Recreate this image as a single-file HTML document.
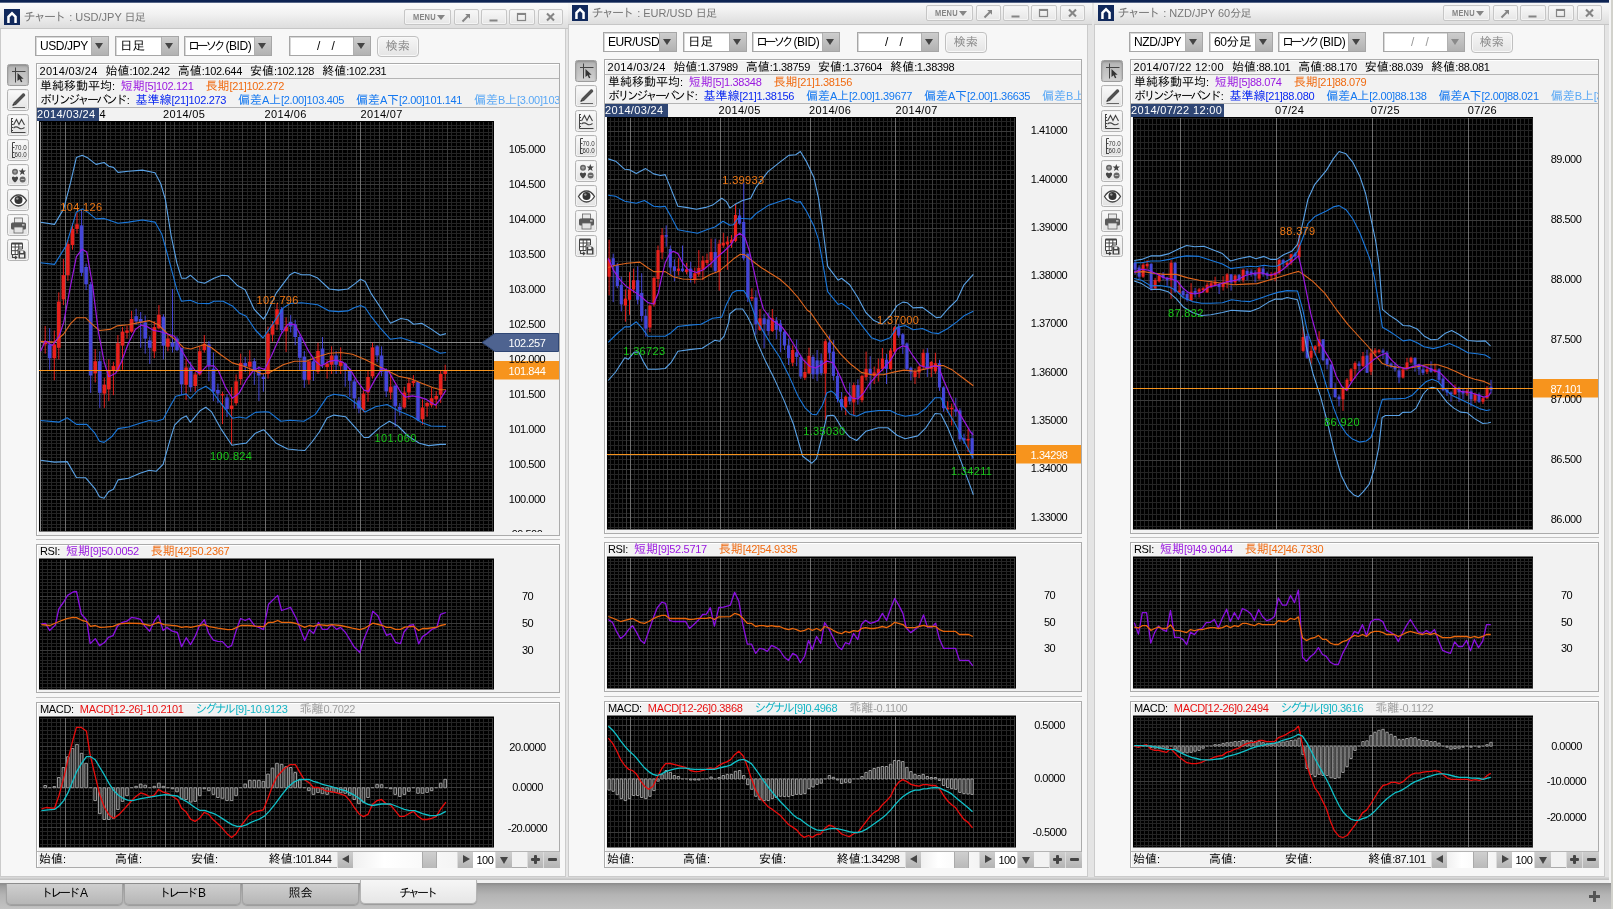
<!DOCTYPE html><html lang="ja"><head><meta charset="utf-8"><title>チャート</title><style>
*{box-sizing:border-box}
html,body{margin:0;padding:0}
body{width:1613px;height:909px;overflow:hidden;position:relative;background:#e4e4e4;font-family:"Liberation Sans","IPAGothic",sans-serif;font-size:11px;color:#000}
div,svg.a,i,b{position:absolute}
span{position:static}
.t{white-space:nowrap}
.n{font-size:11px;letter-spacing:-.5px}
.r{letter-spacing:-.33px}
.d{font-size:11px;letter-spacing:.35px}
.ttl{color:#777;font-size:11px;line-height:16px}
.ttl .j{font-size:11px;letter-spacing:-.8px}
.g{display:inline-block;position:static;width:12px}
.ax{left:0;width:64px;text-align:center;line-height:14px}
.j{font-family:"Liberation Sans","IPAGothic",sans-serif;font-size:12px;letter-spacing:0}
.h{font-family:"Liberation Sans","IPAGothic",sans-serif;font-size:14px;letter-spacing:-.8px}
.dd{letter-spacing:.3px}
.k{font-family:"Liberation Sans","IPAGothic",sans-serif;font-size:12px;letter-spacing:-2.6px;margin-right:2.2px}
.st .k{letter-spacing:-3.4px;margin-right:3px}
.ttl .k{font-size:12px;letter-spacing:-1.8px;margin-right:1.8px}
.tab .k{letter-spacing:-3px;margin-right:3px}
.win{overflow:hidden;will-change:transform}
.tb{background:linear-gradient(#fbfbfb,#f1f1f1 45%,#dddddd);border-bottom:1px solid #c6c6c6}
.body{background:#f7f7f7;border:1px solid #cbcbcb;border-top:0}
.wb{border:1px solid #c6c6c6;border-radius:2px;background:linear-gradient(#f8f8f8,#e6e6e6);box-shadow:inset 0 0 0 1px #f4f4f4}
.wb svg{position:absolute;left:-1px;top:0}
.mn{position:absolute;left:8px;top:1px;font-size:8.5px;font-weight:bold;color:#858585;line-height:12px;letter-spacing:.2px;transform:scaleX(.88);transform-origin:0 0}
.dn{left:32px;top:5px;border:4px solid transparent;border-top:5px solid #858585;border-bottom:0}
.st{font-size:12px;letter-spacing:-.4px}
.st .j{font-size:12.5px}
.st .h{font-size:16px;letter-spacing:-1px}
.sel{background:#fff;border:1px solid #a6a6a6;box-shadow:inset 1px 1px 0 #d8d8d8}
.dis .st{color:#999}
.dis .arr i{border-top-color:#8a8a8a}
.arr{right:0;top:0;bottom:0;background:linear-gradient(#cdcdcd,#b2b2b2);border-left:1px solid #b0b0b0}
.arr i{left:50%;top:50%;margin:-3px 0 0 -4.5px;border:4.5px solid transparent;border-top:6px solid #444;border-bottom:0}
.btn{border:1px solid #c0c0c0;border-radius:4px;background:linear-gradient(#f6f6f6,#e4e4e4);box-shadow:inset 0 0 0 1px #f8f8f8}
.tool{border:1px solid #b4b4b4;border-radius:2.5px;background:linear-gradient(#fafafa,#e2e2e2);box-shadow:inset 0 0 0 1px #f2f2f2}
.tool.on{background:linear-gradient(#b4b4b4,#d0d0d0);box-shadow:inset 0 1px 2px #8c8c8c;border-color:#9c9c9c}
.pan{background:#f2f2f2;border:1px solid #ababab;box-shadow:inset 1px 1px 0 #fff}
.sb{background:linear-gradient(#cecece,#b4b4b4);border-left:1px solid #dcdcdc}
.lf{left:4px;top:3.5px;border:4.5px solid transparent;border-right:7px solid #444;border-left:0}
.rt{left:5px;top:3.5px;border:4.5px solid transparent;border-left:7px solid #444;border-right:0}
.dn2{left:3.5px;top:5px;border:4.5px solid transparent;border-top:7px solid #444;border-bottom:0}
.pm{left:0;width:100%;text-align:center;top:-2.5px;font-size:17px;line-height:18px;font-weight:bold;color:#333;font-family:"Liberation Sans",sans-serif}
.ph{left:3.5px;top:6.5px;width:9px;height:3px;background:#444;border-radius:1px}
.pv{left:6.5px;top:3.5px;width:3px;height:9px;background:#444;border-radius:1px}
.trk{background:linear-gradient(90deg,#f0f0f0,#fff 30%,#f4f4f4)}
.thumb{background:linear-gradient(#cfcfcf,#b9b9b9);border-left:1px solid #aaa;border-right:1px solid #aaa}
.tab{will-change:transform;top:883.5px;height:20.5px;border:1px solid #a2a2a2;border-top:0;border-radius:0 0 5px 5px;background:linear-gradient(#cfcfcf,#b6b6b6);text-align:center;line-height:19px;font-size:12px;box-shadow:0 1px 1px #9a9a9a}
.tab.on{background:linear-gradient(#f6f6f6,#e6e6e6);top:880px;height:24px;line-height:26px;border-color:#b4b4b4}
</style></head><body><div style="left:0px;top:876.5px;width:1613px;height:4px;background:linear-gradient(#dcdcdc,#b6b6b6)"></div><div style="left:0px;top:880px;width:1613px;height:3.5px;background:#f0f0f0"></div><div style="left:0px;top:883px;width:1613px;height:26px;background:linear-gradient(#8a8a8a,#9e9e9e 12%,#b4b4b4 45%,#c3c3c3)"></div><div style="left:1609px;top:0px;width:2px;height:883px;background:#f4f4f4"></div><div style="left:1611px;top:0px;width:2px;height:909px;background:#d2d2cc"></div><div class="win" style="left:0px;top:0px;width:569.5px;height:880px"><div class="tb" style="left:0px;top:3px;width:569.5px;height:26px;"></div><div class="body" style="left:0px;top:29px;width:566px;height:848px;"></div><svg class="a" style="left:4px;top:9px" width="16" height="16" viewBox="0 0 16 16"><rect width="16" height="16" fill="#11295c"/><path d="M3.2 14V7.2L8 2.6L12.8 7.2V14H10.3V8.3L8 6.1L5.7 8.3V14Z" fill="#fff"/></svg><div class="t ttl" style="left:23.5px;top:9px;"><span class="k">チャート</span> : USD/JPY <span class="j">日足</span></div><div class="wb" style="left:404px;top:9px;width:47px;height:15.5px;"><span class="mn">MENU</span><i class="dn"></i></div><div class="wb" style="left:453.5px;top:9px;width:25px;height:15.5px;"><svg width="25" height="15" viewBox="0 0 25 15"><path d="M8.5 11.5L14.5 5.5" stroke="#858585" stroke-width="2"/><path d="M11.2 4H16V8.8Z" fill="#858585"/></svg></div><div class="wb" style="left:481px;top:9px;width:25.5px;height:15.5px;"><svg width="25" height="15" viewBox="0 0 25 15"><rect x="8.5" y="9.5" width="8" height="2" fill="#858585"/></svg></div><div class="wb" style="left:509px;top:9px;width:25.5px;height:15.5px;"><svg width="25" height="15" viewBox="0 0 25 15"><rect x="8.5" y="3.5" width="8" height="7" fill="none" stroke="#858585" stroke-width="1.2"/><rect x="8" y="3" width="9" height="2" fill="#858585"/></svg></div><div class="wb" style="left:537.5px;top:9px;width:25px;height:15.5px;"><svg width="25" height="15" viewBox="0 0 25 15"><path d="M9 3.5L16 10.5M16 3.5L9 10.5" stroke="#858585" stroke-width="2.1"/></svg></div><div class="sel" style="left:35px;top:36px;width:73.5px;height:20px;"><div class="t st" style="left:4px;top:0;line-height:18px">USD/JPY</div><div class="arr" style="width:16.5px"><i></i></div></div><div class="sel" style="left:115px;top:36px;width:63.5px;height:20px;"><div class="t st" style="left:4px;top:0;line-height:18px"><span class="j">日足</span></div><div class="arr" style="width:16.5px"><i></i></div></div><div class="sel" style="left:184px;top:36px;width:87.5px;height:20px;"><div class="t st" style="left:3px;top:0;line-height:18px"><span class="k">ローソク</span>(BID)</div><div class="arr" style="width:16.5px"><i></i></div></div><div class="sel" style="left:289px;top:36px;width:81.5px;height:20px;"><div class="t st" style="left:27px;top:0;line-height:18px">/ /</div><div class="arr" style="width:16.5px"><i></i></div></div><div class="btn" style="left:377px;top:36px;width:41.5px;height:20.5px;"><div class="t" style="left:0;width:100%;text-align:center;top:0;line-height:18px;color:#8a8a8a;font-size:12px"><span class="j">検索</span></div></div><div class="tool on" style="left:7px;top:64px;width:21.5px;height:21.5px;"><svg width="21" height="21" viewBox="0 0 21 21" style="position:absolute;left:-.5px;top:-.5px"><path d="M4 6.5H17.5M7.5 2.5V17.5" stroke="#444" stroke-width="1" fill="none"/><path d="M9.5 8V16L11.6 14.2L13 17.3L14.3 16.7L13 13.7H15.6Z" fill="#333"/></svg></div><div class="tool" style="left:7px;top:89px;width:21.5px;height:21.5px;"><svg width="21" height="21" viewBox="0 0 21 21" style="position:absolute;left:-.5px;top:-.5px"><path d="M4.6 15.4L5.6 12.6L14.6 3.6C15.1 3.1 15.8 3.1 16.3 3.6L16.9 4.2C17.4 4.7 17.4 5.4 16.9 5.9L7.9 14.9Z" fill="#505050"/><path d="M4.3 15.8L6.4 15.2L5 13.8Z" fill="#222"/><path d="M4.5 17.5H17" stroke="#666" stroke-width="1"/></svg></div><div class="tool" style="left:7px;top:114px;width:21.5px;height:21.5px;"><svg width="21" height="21" viewBox="0 0 21 21" style="position:absolute;left:-.5px;top:-.5px"><path d="M3.5 3V17.5H17.5" stroke="#444" fill="none"/><path d="M3 3.5H5M3 6.5H5M3 9.5H5M3 12.5H5M3 15.5H5" stroke="#444"/><path d="M5.5 10L8.5 4.5L11 9.5L13.5 4.5L16.5 10" stroke="#444" fill="none" stroke-width="1.1"/><path d="M5.5 13C7.5 11 9 11.5 11 13S14.5 14 16.5 12.5" stroke="#444" fill="none" stroke-width="1.1"/></svg></div><div class="tool" style="left:7px;top:139px;width:21.5px;height:21.5px;"><svg width="21" height="21" viewBox="0 0 21 21" style="position:absolute;left:-.5px;top:-.5px"><path d="M4.5 2.5V18M4.5 2.5H7M4.5 7.5H6.5M4.5 12.5H6.5M4.5 17.5H7" stroke="#444" fill="none"/><text x="6.6" y="10" font-size="7" font-family="Liberation Sans,sans-serif" fill="#333" textLength="12" lengthAdjust="spacingAndGlyphs">70.0</text><text x="6.6" y="17" font-size="7" font-family="Liberation Sans,sans-serif" fill="#333" textLength="12" lengthAdjust="spacingAndGlyphs">60.0</text></svg></div><div class="tool" style="left:7px;top:164px;width:21.5px;height:21.5px;"><svg width="21" height="21" viewBox="0 0 21 21" style="position:absolute;left:-.5px;top:-.5px"><circle cx="7" cy="6.8" r="3" fill="#666"/><path d="M5.3 6.8H8.7M7 5.1V8.5" stroke="#bbb" stroke-width=".8"/><path d="M14.3 3L15.3 5.6H18L15.8 7.3L16.6 10L14.3 8.4L12 10L12.8 7.3L10.6 5.6H13.3Z" fill="#444"/><path d="M7 17.5C3 14.5 3.5 11.5 5.3 11.5C6.3 11.5 7 12.4 7 12.4S7.7 11.5 8.7 11.5C10.5 11.5 11 14.5 7 17.5Z" fill="#444"/><circle cx="14.6" cy="14.5" r="3" fill="#666"/><path d="M12.9 14.5H16.3" stroke="#bbb" stroke-width=".9"/></svg></div><div class="tool" style="left:7px;top:189px;width:21.5px;height:21.5px;"><svg width="21" height="21" viewBox="0 0 21 21" style="position:absolute;left:-.5px;top:-.5px"><path d="M2.5 10.5C5 6.2 8 5 10.5 5S16 6.2 18.5 10.5C16 14.8 13 16 10.5 16S5 14.8 2.5 10.5Z" fill="#fff" stroke="#444" stroke-width="1.3"/><circle cx="10.5" cy="10" r="4" fill="#333"/><circle cx="9.3" cy="8.6" r="1.2" fill="#999"/></svg></div><div class="tool" style="left:7px;top:214px;width:21.5px;height:21.5px;"><svg width="21" height="21" viewBox="0 0 21 21" style="position:absolute;left:-.5px;top:-.5px"><rect x="6.5" y="3" width="8" height="5" fill="#e8e8e8" stroke="#666" stroke-width=".8"/><rect x="3" y="7.5" width="15" height="7" rx="1.5" fill="#5a5a5a"/><rect x="6" y="12" width="9" height="6" fill="#e4e4e4" stroke="#666" stroke-width=".8"/><rect x="14" y="9.3" width="2.5" height="1.2" fill="#ddd"/></svg></div><div class="tool" style="left:7px;top:239px;width:21.5px;height:21.5px;"><svg width="21" height="21" viewBox="0 0 21 21" style="position:absolute;left:-.5px;top:-.5px"><path d="M3.5 3.5H14.5V9H10V14.5H3.5Z" fill="#fff" stroke="#444"/><path d="M3.5 7H14.5M3.5 10.7H10M7.2 3.5V14.5M10.8 3.5V9" stroke="#444" fill="none"/><path d="M3.5 3.5H14.5" stroke="#444" stroke-width="2"/><path d="M10.5 10.5H16L17.5 12V18.5H10.5Z" fill="#444"/><rect x="12" y="14.5" width="4" height="3" fill="#eee"/><rect x="12.3" y="10.8" width="3" height="2.2" fill="#eee"/><path d="M4.5 15V17.5H8.5M7 16L8.8 17.5L7 19" stroke="#444" fill="none" stroke-width="1.1"/></svg></div><div class="pan" style="left:35.5px;top:63px;width:524px;height:472.5px;"></div><div style="left:35.5px;top:539px;width:524px;height:1px;background:#c2c2c2"></div><div class="pan" style="left:35.5px;top:544px;width:524px;height:149px;"></div><div style="left:35.5px;top:697px;width:524px;height:1px;background:#c2c2c2"></div><div class="pan" style="left:35.5px;top:701.5px;width:524px;height:166.5px;"></div><div style="left:36.5px;top:78px;width:522px;height:1px;background:#b4b4b4"></div><div style="left:36.5px;top:107px;width:522px;height:1px;background:#b4b4b4"></div><div class="t n r" style="left:39.5px;top:63.5px;line-height:14px"><span class="dd">2014/03/24</span><span class="g" style="width:8px"></span><span class="j">始値</span>:102.242<span class="g" style="width:8px"></span><span class="j">高値</span>:102.644<span class="g" style="width:8px"></span><span class="j">安値</span>:102.128<span class="g" style="width:8px"></span><span class="j">終値</span>:102.231</div><div style="left:37px;top:79px;width:521.5px;height:28px;overflow:hidden"><div class="t n r" style="left:3px;top:0px;line-height:14px"><span class="j">単純移動平均</span>:<span class="g" style="width:6px"></span><span style="color:#9a18e0"><span class="j">短期</span>[5]102.121</span><span class="g"></span><span style="color:#f06a10"><span class="j">長期</span>[21]102.272</span></div><div class="t n r" style="left:3px;top:13.5px;line-height:14px"><span class="k">ボリンジャーバンド</span>:<span class="g" style="width:6px"></span><span style="color:#0a28f0"><span class="j">基準線</span>[21]102.273</span><span class="g"></span><span style="color:#1478f0"><span class="j">偏差</span>A<span class="j">上</span>[2.00]103.405</span><span class="g"></span><span style="color:#1478f0"><span class="j">偏差</span>A<span class="j">下</span>[2.00]101.141</span><span class="g"></span><span style="color:#5aa8f5"><span class="j">偏差</span>B<span class="j">上</span>[3.00]103.971</span></div></div><div class="t d" style="left:163px;top:108px;line-height:13px">2014/05</div><div class="t d" style="left:264.5px;top:108px;line-height:13px">2014/06</div><div class="t d" style="left:360.5px;top:108px;line-height:13px">2014/07</div><div class="t d" style="left:99.5px;top:108px;line-height:13px">4</div><div style="left:36.5px;top:107.5px;width:62.5px;height:13.5px;background:#2f4674;overflow:hidden"><div class="t d" style="left:0.5px;top:0.5px;line-height:13px;color:#fff">2014/03/24</div></div><svg class="a" style="left:0;top:0" width="566" height="880" viewBox="0 0 566 880" font-family='Liberation Sans,IPAGothic,sans-serif'><rect x="39" y="121" width="455" height="410.5" fill="#000"/><path d="M42.5 122V530.5M47.5 122V530.5M51.5 122V530.5M56.5 122V530.5M70.5 122V530.5M74.5 122V530.5M79.5 122V530.5M88.5 122V530.5M92.5 122V530.5M97.5 122V530.5M101.5 122V530.5M110.5 122V530.5M115.5 122V530.5M120.5 122V530.5M124.5 122V530.5M133.5 122V530.5M138.5 122V530.5M142.5 122V530.5M147.5 122V530.5M156.5 122V530.5M160.5 122V530.5M170.5 122V530.5M179.5 122V530.5M183.5 122V530.5M188.5 122V530.5M192.5 122V530.5M201.5 122V530.5M206.5 122V530.5M210.5 122V530.5M215.5 122V530.5M224.5 122V530.5M229.5 122V530.5M233.5 122V530.5M238.5 122V530.5M247.5 122V530.5M251.5 122V530.5M256.5 122V530.5M260.5 122V530.5M270.5 122V530.5M274.5 122V530.5M279.5 122V530.5M283.5 122V530.5M292.5 122V530.5M297.5 122V530.5M301.5 122V530.5M306.5 122V530.5M315.5 122V530.5M320.5 122V530.5M324.5 122V530.5M329.5 122V530.5M338.5 122V530.5M342.5 122V530.5M347.5 122V530.5M351.5 122V530.5M365.5 122V530.5M370.5 122V530.5M374.5 122V530.5M383.5 122V530.5M388.5 122V530.5M392.5 122V530.5M397.5 122V530.5M406.5 122V530.5M410.5 122V530.5M415.5 122V530.5M420.5 122V530.5M429.5 122V530.5M433.5 122V530.5M438.5 122V530.5M442.5 122V530.5M451.5 122V530.5M456.5 122V530.5M460.5 122V530.5M465.5 122V530.5M474.5 122V530.5M479.5 122V530.5M483.5 122V530.5M488.5 122V530.5M40 125.5H493M40 128.5H493M40 132.5H493M40 135.5H493M40 139.5H493M40 142.5H493M40 146.5H493M40 153.5H493M40 156.5H493M40 160.5H493M40 163.5H493M40 167.5H493M40 170.5H493M40 174.5H493M40 177.5H493M40 181.5H493M40 188.5H493M40 191.5H493M40 195.5H493M40 198.5H493M40 202.5H493M40 205.5H493M40 209.5H493M40 212.5H493M40 216.5H493M40 223.5H493M40 226.5H493M40 230.5H493M40 233.5H493M40 237.5H493M40 240.5H493M40 244.5H493M40 247.5H493M40 251.5H493M40 258.5H493M40 261.5H493M40 265.5H493M40 268.5H493M40 272.5H493M40 275.5H493M40 279.5H493M40 282.5H493M40 286.5H493M40 293.5H493M40 296.5H493M40 300.5H493M40 303.5H493M40 307.5H493M40 310.5H493M40 314.5H493M40 317.5H493M40 321.5H493M40 328.5H493M40 331.5H493M40 335.5H493M40 338.5H493M40 342.5H493M40 345.5H493M40 349.5H493M40 352.5H493M40 356.5H493M40 363.5H493M40 366.5H493M40 370.5H493M40 373.5H493M40 377.5H493M40 380.5H493M40 384.5H493M40 387.5H493M40 391.5H493M40 398.5H493M40 401.5H493M40 405.5H493M40 408.5H493M40 412.5H493M40 415.5H493M40 419.5H493M40 422.5H493M40 426.5H493M40 433.5H493M40 436.5H493M40 440.5H493M40 443.5H493M40 447.5H493M40 450.5H493M40 454.5H493M40 457.5H493M40 461.5H493M40 468.5H493M40 471.5H493M40 475.5H493M40 478.5H493M40 482.5H493M40 485.5H493M40 489.5H493M40 492.5H493M40 496.5H493M40 503.5H493M40 506.5H493M40 510.5H493M40 513.5H493M40 517.5H493M40 520.5H493M40 524.5H493M40 527.5H493" stroke="#242424" stroke-width="1" fill="none" shape-rendering="crispEdges"/><path d="M40 149.5H493M40 184.5H493M40 219.5H493M40 254.5H493M40 289.5H493M40 324.5H493M40 359.5H493M40 394.5H493M40 429.5H493M40 464.5H493M40 499.5H493M60.5 122V530.5M83.5 122V530.5M106.5 122V530.5M129.5 122V530.5M151.5 122V530.5M174.5 122V530.5M197.5 122V530.5M220.5 122V530.5M242.5 122V530.5M288.5 122V530.5M310.5 122V530.5M333.5 122V530.5M356.5 122V530.5M379.5 122V530.5M401.5 122V530.5M424.5 122V530.5M447.5 122V530.5M470.5 122V530.5M492.5 122V530.5" stroke="#3a3a3a" stroke-width="1" fill="none" shape-rendering="crispEdges"/><path d="M65.5 122V530.5M165.5 122V530.5M265.5 122V530.5M360.5 122V530.5" stroke="#6e6e6e" stroke-width="1" fill="none" shape-rendering="crispEdges"/><clipPath id="c1"><rect x="39" y="121" width="455" height="410.5"/></clipPath><g clip-path="url(#c1)"><path d="M40 342.5H494M40.5 122V530.5" stroke="#8a8a8a" stroke-width="1" shape-rendering="crispEdges"/><path d="M45.2 325.9V353.6" stroke="#e8201c" stroke-width="1"/><rect x="43.4" y="342.1" width="3.6" height="2.3" fill="#e8201c"/><path d="M49.7 328.2V369.8" stroke="#4446d8" stroke-width="1"/><rect x="47.9" y="344.4" width="3.6" height="13.9" fill="#4446d8"/><path d="M54.3 330.5V380.2" stroke="#e8201c" stroke-width="1"/><rect x="52.5" y="344.4" width="3.6" height="13.9" fill="#e8201c"/><path d="M58.8 292.4V359.4" stroke="#e8201c" stroke-width="1"/><rect x="57" y="301.6" width="3.6" height="46.2" fill="#e8201c"/><path d="M63.4 258.9V305.1" stroke="#e8201c" stroke-width="1"/><rect x="61.6" y="275.1" width="3.6" height="24.3" fill="#e8201c"/><path d="M67.9 240.4V280.9" stroke="#e8201c" stroke-width="1"/><rect x="66.1" y="243.9" width="3.6" height="31.2" fill="#e8201c"/><path d="M72.5 223.1V249.7" stroke="#e8201c" stroke-width="1"/><rect x="70.7" y="228.9" width="3.6" height="16.2" fill="#e8201c"/><path d="M77 212.7V233.5" stroke="#e8201c" stroke-width="1"/><rect x="75.2" y="224.3" width="3.6" height="4.6" fill="#e8201c"/><path d="M81.6 210.4V276.2" stroke="#4446d8" stroke-width="1"/><rect x="79.8" y="225.4" width="3.6" height="47.4" fill="#4446d8"/><path d="M86.1 263.5V290.1" stroke="#4446d8" stroke-width="1"/><rect x="84.3" y="267" width="3.6" height="17.3" fill="#4446d8"/><path d="M90.7 282V392.9" stroke="#4446d8" stroke-width="1"/><rect x="88.9" y="284.3" width="3.6" height="91.2" fill="#4446d8"/><path d="M95.2 349V382.5" stroke="#e8201c" stroke-width="1"/><rect x="93.4" y="361.2" width="3.6" height="12" fill="#e8201c"/><path d="M99.8 351.3V407.9" stroke="#4446d8" stroke-width="1"/><rect x="98" y="361.2" width="3.6" height="31.6" fill="#4446d8"/><path d="M104.3 377.9V407.9" stroke="#e8201c" stroke-width="1"/><rect x="102.5" y="384.8" width="3.6" height="8.8" fill="#e8201c"/><path d="M108.8 359.4V401" stroke="#e8201c" stroke-width="1"/><rect x="107" y="370.9" width="3.6" height="18.5" fill="#e8201c"/><path d="M113.4 361.7V395.2" stroke="#e8201c" stroke-width="1"/><rect x="111.6" y="365.9" width="3.6" height="4.6" fill="#e8201c"/><path d="M117.9 335.1V372.1" stroke="#e8201c" stroke-width="1"/><rect x="116.1" y="343.2" width="3.6" height="27.7" fill="#e8201c"/><path d="M122.5 327.1V369.8" stroke="#e8201c" stroke-width="1"/><rect x="120.7" y="331.7" width="3.6" height="13.9" fill="#e8201c"/><path d="M127 325.9V338.6" stroke="#e8201c" stroke-width="1"/><rect x="125.2" y="330.5" width="3.6" height="2.3" fill="#e8201c"/><path d="M131.6 310.9V332.8" stroke="#e8201c" stroke-width="1"/><rect x="129.8" y="319" width="3.6" height="12.7" fill="#e8201c"/><path d="M136.1 308.6V324.7" stroke="#4446d8" stroke-width="1"/><rect x="134.3" y="316.2" width="3.6" height="5.1" fill="#4446d8"/><path d="M140.7 312V347.8" stroke="#4446d8" stroke-width="1"/><rect x="138.9" y="319" width="3.6" height="3.5" fill="#4446d8"/><path d="M145.2 315.5V353.6" stroke="#4446d8" stroke-width="1"/><rect x="143.4" y="322.4" width="3.6" height="16.2" fill="#4446d8"/><path d="M149.8 336.3V364" stroke="#4446d8" stroke-width="1"/><rect x="148" y="340.4" width="3.6" height="7.4" fill="#4446d8"/><path d="M154.3 321.3V358.2" stroke="#e8201c" stroke-width="1"/><rect x="152.5" y="327.1" width="3.6" height="24.3" fill="#e8201c"/><path d="M158.9 305.1V329.4" stroke="#e8201c" stroke-width="1"/><rect x="157.1" y="314.8" width="3.6" height="13.4" fill="#e8201c"/><path d="M163.4 314.3V359.4" stroke="#4446d8" stroke-width="1"/><rect x="161.6" y="316.7" width="3.6" height="28.9" fill="#4446d8"/><path d="M167.9 335.1V351.3" stroke="#e8201c" stroke-width="1"/><rect x="166.1" y="338.6" width="3.6" height="8.1" fill="#e8201c"/><path d="M172.5 288.9V352.5" stroke="#4446d8" stroke-width="1"/><rect x="170.7" y="342.8" width="3.6" height="3.9" fill="#4446d8"/><path d="M177 336.3V351.3" stroke="#4446d8" stroke-width="1"/><rect x="175.2" y="338.6" width="3.6" height="11.6" fill="#4446d8"/><path d="M181.6 347.8V395.2" stroke="#4446d8" stroke-width="1"/><rect x="179.8" y="347.8" width="3.6" height="36.5" fill="#4446d8"/><path d="M186.1 359.4V399.8" stroke="#e8201c" stroke-width="1"/><rect x="184.3" y="367.5" width="3.6" height="17.3" fill="#e8201c"/><path d="M190.7 361.7V391.7" stroke="#4446d8" stroke-width="1"/><rect x="188.9" y="367.5" width="3.6" height="19.6" fill="#4446d8"/><path d="M195.2 372.1V391.7" stroke="#e8201c" stroke-width="1"/><rect x="193.4" y="374.4" width="3.6" height="11.6" fill="#e8201c"/><path d="M199.8 346.7V375.6" stroke="#e8201c" stroke-width="1"/><rect x="198" y="351.3" width="3.6" height="23.1" fill="#e8201c"/><path d="M204.3 335.1V352.5" stroke="#e8201c" stroke-width="1"/><rect x="202.5" y="343.7" width="3.6" height="6.5" fill="#e8201c"/><path d="M208.9 340.9V381.3" stroke="#4446d8" stroke-width="1"/><rect x="207.1" y="344.4" width="3.6" height="20.8" fill="#4446d8"/><path d="M213.4 352.5V401" stroke="#4446d8" stroke-width="1"/><rect x="211.6" y="368.6" width="3.6" height="23.1" fill="#4446d8"/><path d="M217.9 383.6V403.3" stroke="#4446d8" stroke-width="1"/><rect x="216.1" y="389.9" width="3.6" height="3.7" fill="#4446d8"/><path d="M222.5 391.7V424.1" stroke="#e8201c" stroke-width="1"/><rect x="220.7" y="394" width="3.6" height="1.4" fill="#e8201c"/><path d="M227 394V417.1" stroke="#4446d8" stroke-width="1"/><rect x="225.2" y="397.5" width="3.6" height="11.6" fill="#4446d8"/><path d="M231.6 387.1V444.9" stroke="#e8201c" stroke-width="1"/><rect x="229.8" y="405.6" width="3.6" height="3.5" fill="#e8201c"/><path d="M236.1 374.4V405.6" stroke="#e8201c" stroke-width="1"/><rect x="234.3" y="381.3" width="3.6" height="21.9" fill="#e8201c"/><path d="M240.7 353.6V384.8" stroke="#e8201c" stroke-width="1"/><rect x="238.9" y="362.9" width="3.6" height="16.2" fill="#e8201c"/><path d="M245.2 357.1V372.1" stroke="#4446d8" stroke-width="1"/><rect x="243.4" y="362.9" width="3.6" height="3.5" fill="#4446d8"/><path d="M249.8 350.2V375.6" stroke="#e8201c" stroke-width="1"/><rect x="248" y="361.7" width="3.6" height="5.1" fill="#e8201c"/><path d="M254.3 358.2V384.8" stroke="#4446d8" stroke-width="1"/><rect x="252.5" y="361.2" width="3.6" height="9.7" fill="#4446d8"/><path d="M258.9 366.3V401" stroke="#4446d8" stroke-width="1"/><rect x="257.1" y="370.9" width="3.6" height="4.6" fill="#4446d8"/><path d="M263.4 373.3V391.7" stroke="#4446d8" stroke-width="1"/><rect x="261.6" y="376.7" width="3.6" height="2.3" fill="#4446d8"/><path d="M268 326.6V378.6" stroke="#e8201c" stroke-width="1"/><rect x="266.2" y="333.6" width="3.6" height="40.4" fill="#e8201c"/><path d="M272.5 320.9V341.6" stroke="#e8201c" stroke-width="1"/><rect x="270.7" y="324.3" width="3.6" height="10.4" fill="#e8201c"/><path d="M277 303.5V330.1" stroke="#e8201c" stroke-width="1"/><rect x="275.2" y="309.3" width="3.6" height="15" fill="#e8201c"/><path d="M281.6 307V332.4" stroke="#4446d8" stroke-width="1"/><rect x="279.8" y="309.3" width="3.6" height="20.8" fill="#4446d8"/><path d="M286.1 317.4V352" stroke="#e8201c" stroke-width="1"/><rect x="284.3" y="326.6" width="3.6" height="4.6" fill="#e8201c"/><path d="M290.7 315.1V332.4" stroke="#4446d8" stroke-width="1"/><rect x="288.9" y="322" width="3.6" height="4.6" fill="#4446d8"/><path d="M295.2 319.7V345.1" stroke="#4446d8" stroke-width="1"/><rect x="293.4" y="324.3" width="3.6" height="12.7" fill="#4446d8"/><path d="M299.8 334.7V370.5" stroke="#4446d8" stroke-width="1"/><rect x="298" y="337" width="3.6" height="20.8" fill="#4446d8"/><path d="M304.3 350.9V387.8" stroke="#4446d8" stroke-width="1"/><rect x="302.5" y="356.7" width="3.6" height="23.1" fill="#4446d8"/><path d="M308.9 361.3V384.4" stroke="#e8201c" stroke-width="1"/><rect x="307.1" y="361.3" width="3.6" height="18.5" fill="#e8201c"/><path d="M313.4 357.8V380.9" stroke="#4446d8" stroke-width="1"/><rect x="311.6" y="361.3" width="3.6" height="9.2" fill="#4446d8"/><path d="M318 342.8V374" stroke="#e8201c" stroke-width="1"/><rect x="316.2" y="350.9" width="3.6" height="20.8" fill="#e8201c"/><path d="M322.5 337V368.2" stroke="#4446d8" stroke-width="1"/><rect x="320.7" y="348.6" width="3.6" height="16.2" fill="#4446d8"/><path d="M327.1 360.1V378.6" stroke="#e8201c" stroke-width="1"/><rect x="325.3" y="363.6" width="3.6" height="3.5" fill="#e8201c"/><path d="M331.6 346.3V374" stroke="#e8201c" stroke-width="1"/><rect x="329.8" y="355.5" width="3.6" height="9.2" fill="#e8201c"/><path d="M336.1 350.9V374" stroke="#4446d8" stroke-width="1"/><rect x="334.3" y="355.5" width="3.6" height="9.2" fill="#4446d8"/><path d="M340.7 347.4V374" stroke="#e8201c" stroke-width="1"/><rect x="338.9" y="361.3" width="3.6" height="4.6" fill="#e8201c"/><path d="M345.2 362.4V386.7" stroke="#4446d8" stroke-width="1"/><rect x="343.4" y="363.6" width="3.6" height="6.9" fill="#4446d8"/><path d="M349.8 368.2V397.1" stroke="#4446d8" stroke-width="1"/><rect x="348" y="370.5" width="3.6" height="10.4" fill="#4446d8"/><path d="M354.3 378.6V408.6" stroke="#4446d8" stroke-width="1"/><rect x="352.5" y="381.4" width="3.6" height="16.9" fill="#4446d8"/><path d="M358.9 397.1V413.3" stroke="#4446d8" stroke-width="1"/><rect x="357.1" y="400.5" width="3.6" height="8.1" fill="#4446d8"/><path d="M363.4 390.2V412.1" stroke="#e8201c" stroke-width="1"/><rect x="361.6" y="393.6" width="3.6" height="16.2" fill="#e8201c"/><path d="M368 370.5V401.7" stroke="#e8201c" stroke-width="1"/><rect x="366.2" y="377" width="3.6" height="15.5" fill="#e8201c"/><path d="M372.5 342.8V378.6" stroke="#e8201c" stroke-width="1"/><rect x="370.7" y="347.4" width="3.6" height="28.9" fill="#e8201c"/><path d="M377.1 345.1V362.4" stroke="#4446d8" stroke-width="1"/><rect x="375.3" y="346.3" width="3.6" height="9.2" fill="#4446d8"/><path d="M381.6 346.3V376.3" stroke="#4446d8" stroke-width="1"/><rect x="379.8" y="355.5" width="3.6" height="16.2" fill="#4446d8"/><path d="M386.2 368.2V397.1" stroke="#4446d8" stroke-width="1"/><rect x="384.4" y="370.5" width="3.6" height="20.8" fill="#4446d8"/><path d="M390.7 374V399.4" stroke="#e8201c" stroke-width="1"/><rect x="388.9" y="386.7" width="3.6" height="5.8" fill="#e8201c"/><path d="M395.2 385.5V427.1" stroke="#4446d8" stroke-width="1"/><rect x="393.4" y="385.5" width="3.6" height="20.8" fill="#4446d8"/><path d="M399.8 402.9V415.6" stroke="#4446d8" stroke-width="1"/><rect x="398" y="406.8" width="3.6" height="3" fill="#4446d8"/><path d="M404.3 386.7V408.6" stroke="#e8201c" stroke-width="1"/><rect x="402.5" y="392.5" width="3.6" height="15" fill="#e8201c"/><path d="M408.9 378.6V399.4" stroke="#e8201c" stroke-width="1"/><rect x="407.1" y="383.2" width="3.6" height="9.2" fill="#e8201c"/><path d="M413.4 375.1V386.7" stroke="#e8201c" stroke-width="1"/><rect x="411.6" y="380.9" width="3.6" height="2.3" fill="#e8201c"/><path d="M418 382.1V421.3" stroke="#4446d8" stroke-width="1"/><rect x="416.2" y="382.1" width="3.6" height="38.1" fill="#4446d8"/><path d="M422.5 399.4V424.8" stroke="#e8201c" stroke-width="1"/><rect x="420.7" y="407.5" width="3.6" height="11.6" fill="#e8201c"/><path d="M427.1 401.7V416.7" stroke="#e8201c" stroke-width="1"/><rect x="425.3" y="402.9" width="3.6" height="3.5" fill="#e8201c"/><path d="M431.6 387.8V407.5" stroke="#e8201c" stroke-width="1"/><rect x="429.8" y="398.2" width="3.6" height="6.9" fill="#e8201c"/><path d="M436.2 391.3V408.6" stroke="#e8201c" stroke-width="1"/><rect x="434.4" y="395.9" width="3.6" height="3.5" fill="#e8201c"/><path d="M440.7 370.5V402.9" stroke="#e8201c" stroke-width="1"/><rect x="438.9" y="374" width="3.6" height="20.8" fill="#e8201c"/><path d="M445.2 364.7V380.9" stroke="#e8201c" stroke-width="1"/><rect x="443.4" y="370.5" width="3.6" height="3.5" fill="#e8201c"/><polyline points="40.6,222.3 54.5,224.4 63.7,208.9 70.6,182.4 76.4,157.4 82.2,155.3 88,158.1 96,164.4 104.1,162.5 108.8,166.2 113.4,167.4 118,172.4 128.4,171.3 142.3,170.1 155,172.7 160.7,183.5 165.4,199.7 171.1,235.5 176.9,263.2 181.5,278.2 186.2,278.2 190.3,275.2 197.7,281.7 204.6,283.3 213.9,278.2 222,275.2 227.7,275.7 237,285.2 245.1,289.8 254.3,309.4 263.5,319.1 266.9,313.9 276.2,293.1 290,274.7 294.6,272.3 301.6,274.7 309.7,274.7 317.7,278.1 329.3,289 338.5,290.1 347.8,289 354.7,283.9 360.5,279.3 365.1,281.6 370.9,293.1 380.1,307 390.5,323.2 400.9,318.5 407.8,319.7 413.6,324.3 421.7,323.2 430.9,328.9 440.2,335.2 446,333.6" fill="none" stroke="#5aa2e6" stroke-width="1.1" stroke-linejoin="round"/><polyline points="40.6,460.2 54.5,462.1 67.2,461.6 76.4,477.5 85.7,477.8 94.9,488.6 99.5,496.7 104.1,498.3 108.8,491.4 113.4,489.3 118,479.9 128.4,478.2 140,473.2 149.2,470.2 156.1,471.3 163.1,464.4 170,440.1 174.6,425.1 181.5,418.2 186.2,415.9 190.3,422.3 200,410.8 205.8,407.3 211.6,411.9 220.8,428.6 231.9,445.2 239.3,444 246.2,443.1 255.4,433.2 263.5,429.7 266.9,432.9 276.2,443.3 287.7,449 297.5,450 304.8,450.5 312,442 319.3,432 327,417.9 333.9,415.1 345.5,416.7 357,429.4 364,437.5 368.6,437.5 380.1,427.1 389.4,421.3 398,426 408,436 419.4,443.3 428.6,445.6 440.2,444.4 446,444.4" fill="none" stroke="#5aa2e6" stroke-width="1.1" stroke-linejoin="round"/><polyline points="40.6,262.8 54.5,264.4 66,245.9 76.4,211.9 82.2,208.9 88,212.4 96,218.9 104.1,218.4 118,223.3 128.4,222.1 142.3,220 155,222.1 161.9,234.3 171.1,267.8 176.9,289.8 181.5,301.3 190.3,300.2 197.7,303.2 209.3,303.6 213.9,301.3 223.1,301.3 232.4,305.9 239.3,312.9 246.2,316.3 255.4,330 263,338 272,325 283.1,308.1 290,303.5 301.6,302.8 317.7,304.7 329.3,310.9 338.5,311.6 347.8,310.9 354.7,307.5 360.5,305.4 365.1,307.5 370.9,316.2 380.1,327.8 390.5,339.3 400.9,337.7 412.5,341.6 421.7,344 430.9,348.6 440.2,353.2 446,352.5" fill="none" stroke="#1a78dc" stroke-width="1.1" stroke-linejoin="round"/><polyline points="40.6,420.5 59.1,422.1 67.2,417.7 76.4,424.4 86.8,424.4 94.9,433.2 99.5,441.3 104.1,442.4 112.2,436.2 118,428.6 128.4,427 140,423.3 149.2,420.5 156.1,421.2 163.1,419.3 170,406.6 175.8,396.2 186.2,393.9 190.3,398.5 197.7,390.5 205.8,386.3 211.6,390.5 220.8,403.2 232.4,418.2 239.3,417 246.2,418.2 255.4,412.4 264.7,411.7 269.2,412.1 280.8,421.3 290,420.2 303.9,421.3 315.4,414.4 327,397.1 333.9,394.3 345.5,395.9 357,404 365.1,412.1 375.5,406.8 387.1,404.5 398.6,410.9 412.5,416.7 421.7,422.5 430.9,426 446,426.4" fill="none" stroke="#1a78dc" stroke-width="1.1" stroke-linejoin="round"/><polyline points="40.6,341.4 54.5,342.1 63.7,334 70.6,323.6 76.4,317.8 85.7,317.8 91.4,323.6 99.5,330.5 109.9,329.4 116.9,325.9 128.4,324.7 140,322.4 149.2,320.6 158.4,324.7 167.7,334 176.9,340.9 183.8,347.8 190.8,349 197.7,346.7 204.6,344.4 211.6,347.8 220.8,354.8 232.4,362.9 243.9,366.3 255.4,370.9 262,374 269.2,372.8 283.1,364.7 294.6,361.3 306.2,361.3 317.7,356.7 329.3,353.2 340.9,352.5 352.4,354.3 364,359 375.5,364.7 387.1,370.5 398.6,376.3 410.2,378.6 421.7,383.2 433.3,387.8 440.2,389.7 446,389.7" fill="none" stroke="#e0661c" stroke-width="1.1" stroke-linejoin="round"/><polyline points="40.6,351.3 45.2,340.9 52.2,345.5 59.1,336.3 63.7,322.4 70.6,285.5 76.4,256.6 82.2,249.2 86.8,252 92.6,285.5 98.4,331.7 104.1,361.7 108.8,376.7 115.7,373.2 121.5,361.7 128.4,343.2 135.3,329.4 141.1,325.2 146.9,326.6 153.8,330.5 160.7,331.7 167.7,334 174.6,336.3 181.5,350.2 188.5,361.7 195.4,370.9 200,373.2 206.9,365.9 213.9,365.9 218.5,370.9 225.4,387.1 232.4,398.2 239.3,392.9 246.2,380.2 253.1,370.9 258.9,367.5 264.6,369.4 271.6,355.5 280.8,334.7 287.7,324.3 294.6,324.3 301.6,337 308.5,350.9 315.4,361.3 321.2,365.9 329.3,361.3 336.2,360.1 343.2,362.4 350.1,369.4 357,380.9 364,390.2 368.6,391.3 375.5,378.6 382.4,368.2 388.2,370.5 394,380.9 400.9,392.5 405.5,397.1 412.5,395.9 419.4,397.1 426.3,399.4 435.6,405.2 440.2,399.4 446,390.2" fill="none" stroke="#9a18e0" stroke-width="1.2" stroke-linejoin="round"/><path d="M39 370.5H494" stroke="#f7941d" stroke-width="1" shape-rendering="crispEdges"/><text x="81.4" y="211.2" font-size="11" fill="#f07814" text-anchor="middle" letter-spacing=".35">104.126</text><text x="277.7" y="303.5" font-size="11" fill="#f07814" text-anchor="middle" letter-spacing=".35">102.796</text><text x="231.2" y="459.8" font-size="11" fill="#18c818" text-anchor="middle" letter-spacing=".35">100.824</text><text x="395.6" y="442.1" font-size="11" fill="#18c818" text-anchor="middle" letter-spacing=".35">101.060</text></g><path d="M482 342.5L495 333.5H558.5 V351.5 H495Z" fill="#4e6390" stroke="#2f4674" stroke-width="1"/><text x="527" y="346.5" font-size="11" fill="#fff" text-anchor="middle" letter-spacing="-.4">102.257</text><rect x="494" y="361" width="65" height="18.5" fill="#f7941d"/><text x="527" y="374.5" font-size="11" fill="#fff" text-anchor="middle" letter-spacing="-.4">101.844</text><rect x="39" y="558.5" width="455" height="131.0" fill="#000"/><path d="M42.5 559.5V688.5M47.5 559.5V688.5M51.5 559.5V688.5M56.5 559.5V688.5M70.5 559.5V688.5M74.5 559.5V688.5M79.5 559.5V688.5M88.5 559.5V688.5M92.5 559.5V688.5M97.5 559.5V688.5M101.5 559.5V688.5M110.5 559.5V688.5M115.5 559.5V688.5M120.5 559.5V688.5M124.5 559.5V688.5M133.5 559.5V688.5M138.5 559.5V688.5M142.5 559.5V688.5M147.5 559.5V688.5M156.5 559.5V688.5M160.5 559.5V688.5M170.5 559.5V688.5M179.5 559.5V688.5M183.5 559.5V688.5M188.5 559.5V688.5M192.5 559.5V688.5M201.5 559.5V688.5M206.5 559.5V688.5M210.5 559.5V688.5M215.5 559.5V688.5M224.5 559.5V688.5M229.5 559.5V688.5M233.5 559.5V688.5M238.5 559.5V688.5M247.5 559.5V688.5M251.5 559.5V688.5M256.5 559.5V688.5M260.5 559.5V688.5M270.5 559.5V688.5M274.5 559.5V688.5M279.5 559.5V688.5M283.5 559.5V688.5M292.5 559.5V688.5M297.5 559.5V688.5M301.5 559.5V688.5M306.5 559.5V688.5M315.5 559.5V688.5M320.5 559.5V688.5M324.5 559.5V688.5M329.5 559.5V688.5M338.5 559.5V688.5M342.5 559.5V688.5M347.5 559.5V688.5M351.5 559.5V688.5M365.5 559.5V688.5M370.5 559.5V688.5M374.5 559.5V688.5M383.5 559.5V688.5M388.5 559.5V688.5M392.5 559.5V688.5M397.5 559.5V688.5M406.5 559.5V688.5M410.5 559.5V688.5M415.5 559.5V688.5M420.5 559.5V688.5M429.5 559.5V688.5M433.5 559.5V688.5M438.5 559.5V688.5M442.5 559.5V688.5M451.5 559.5V688.5M456.5 559.5V688.5M460.5 559.5V688.5M465.5 559.5V688.5M474.5 559.5V688.5M479.5 559.5V688.5M483.5 559.5V688.5M488.5 559.5V688.5M40 562.5H493M40 565.5H493M40 569.5H493M40 572.5H493M40 575.5H493M40 579.5H493M40 582.5H493M40 585.5H493M40 589.5H493M40 592.5H493M40 599.5H493M40 602.5H493M40 606.5H493M40 609.5H493M40 612.5H493M40 616.5H493M40 619.5H493M40 626.5H493M40 629.5H493M40 633.5H493M40 636.5H493M40 639.5H493M40 643.5H493M40 646.5H493M40 653.5H493M40 656.5H493M40 660.5H493M40 663.5H493M40 666.5H493M40 670.5H493M40 673.5H493M40 677.5H493M40 680.5H493M40 683.5H493M40 687.5H493" stroke="#242424" stroke-width="1" fill="none" shape-rendering="crispEdges"/><path d="M40 596.5H493M40 623.5H493M40 650.5H493M60.5 559.5V688.5M83.5 559.5V688.5M106.5 559.5V688.5M129.5 559.5V688.5M151.5 559.5V688.5M174.5 559.5V688.5M197.5 559.5V688.5M220.5 559.5V688.5M242.5 559.5V688.5M288.5 559.5V688.5M310.5 559.5V688.5M333.5 559.5V688.5M356.5 559.5V688.5M379.5 559.5V688.5M401.5 559.5V688.5M424.5 559.5V688.5M447.5 559.5V688.5M470.5 559.5V688.5M492.5 559.5V688.5" stroke="#3a3a3a" stroke-width="1" fill="none" shape-rendering="crispEdges"/><path d="M65.5 559.5V688.5M165.5 559.5V688.5M265.5 559.5V688.5M360.5 559.5V688.5" stroke="#6e6e6e" stroke-width="1" fill="none" shape-rendering="crispEdges"/><polyline points="41.4,623.9 45.6,623.5 49.6,630.5 55.3,625.1 58.8,608.9 63.7,602 67.6,595.4 73,592 76.5,591.5 81.4,614.3 86.5,619.7 90.2,643.6 95.3,638.6 99.5,645.6 104.5,642.5 108.4,637.4 113,635.6 117.6,625.9 122.3,622.3 126.9,621.2 131.5,617.4 136.1,618.2 140.7,619.4 144.6,625.9 149.7,631.2 154.6,620.5 158.5,615.5 163.1,630.5 166.9,627.4 172.3,631.2 177.4,632.5 181.6,646.7 186.2,637.7 190.5,644.6 195.4,635.9 199.3,625.9 204.4,619.7 208.5,632.8 213.4,640.2 217.8,641.3 222.4,641.6 227.8,647.4 231.6,645.6 236.2,630.5 240.6,618.5 245.2,620.5 249.3,618.5 254.7,625.9 259.4,627.7 263.5,629.6 268.5,604.3 277.7,595.4 281.6,610.5 290.5,607.4 296.2,618.2 304.7,640.5 309.3,629.7 313.6,633.6 318.5,622.3 322.4,629.4 327.3,629.4 331.6,624.6 336.6,629.4 340.6,627.4 345.5,632.5 354,646.7 359.8,652.5 364,639 369.4,625.9 372.8,611.2 377.8,615.8 382.5,626.6 386.6,635.4 390.6,633.6 395.6,642.5 400.5,643.6 404,632 409.4,625.5 413.6,624.6 418.7,643.9 422.5,636.6 427.1,633.6 431.8,629.4 436.8,627.4 440.5,614.3 445.9,612.5" fill="none" stroke="#8a10e0" stroke-width="1.3" stroke-linejoin="round"/><polyline points="41.4,624.6 49.9,625.5 59.1,621.5 66.8,618.6 73,617.4 76.5,617.7 82.2,620.5 86.8,621.7 90.7,626.3 95.3,625.5 99.9,627.4 105.3,627.1 113,626.3 119.2,623.9 128.4,623.2 140.7,623.5 150,625.5 158.5,622.3 163.9,624.6 176.9,625.9 181.6,627.4 186.2,626.6 190.8,627.4 197.7,625.9 204.4,624.6 209.3,626.6 217.8,628.2 227.8,629.7 232.4,629.4 240.9,625.5 249.3,625.5 254.7,626.2 263.9,626.6 268.5,622.3 273.1,622.3 277.7,620.5 281.6,622.3 290.8,622.3 296.2,623.5 304.7,627.4 309.3,625.5 313.6,626.3 318.5,624.6 327.3,625.5 331.6,624.6 340.6,625.5 352.4,628.2 359.8,629.7 364.7,628.2 372.8,623.2 382.5,625.5 386.6,627.4 390.6,627.4 395.6,629.4 400.5,629.4 404.8,627.1 413.6,626.3 418.7,630.5 422.5,628.5 427.1,628.5 436.8,627.1 440.5,625.5 445.9,624.3" fill="none" stroke="#e8660c" stroke-width="1.3" stroke-linejoin="round"/><rect x="39" y="716.5" width="455" height="131.0" fill="#000"/><path d="M42.5 717.5V846.5M47.5 717.5V846.5M51.5 717.5V846.5M56.5 717.5V846.5M70.5 717.5V846.5M74.5 717.5V846.5M79.5 717.5V846.5M88.5 717.5V846.5M92.5 717.5V846.5M97.5 717.5V846.5M101.5 717.5V846.5M110.5 717.5V846.5M115.5 717.5V846.5M120.5 717.5V846.5M124.5 717.5V846.5M133.5 717.5V846.5M138.5 717.5V846.5M142.5 717.5V846.5M147.5 717.5V846.5M156.5 717.5V846.5M160.5 717.5V846.5M170.5 717.5V846.5M179.5 717.5V846.5M183.5 717.5V846.5M188.5 717.5V846.5M192.5 717.5V846.5M201.5 717.5V846.5M206.5 717.5V846.5M210.5 717.5V846.5M215.5 717.5V846.5M224.5 717.5V846.5M229.5 717.5V846.5M233.5 717.5V846.5M238.5 717.5V846.5M247.5 717.5V846.5M251.5 717.5V846.5M256.5 717.5V846.5M260.5 717.5V846.5M270.5 717.5V846.5M274.5 717.5V846.5M279.5 717.5V846.5M283.5 717.5V846.5M292.5 717.5V846.5M297.5 717.5V846.5M301.5 717.5V846.5M306.5 717.5V846.5M315.5 717.5V846.5M320.5 717.5V846.5M324.5 717.5V846.5M329.5 717.5V846.5M338.5 717.5V846.5M342.5 717.5V846.5M347.5 717.5V846.5M351.5 717.5V846.5M365.5 717.5V846.5M370.5 717.5V846.5M374.5 717.5V846.5M383.5 717.5V846.5M388.5 717.5V846.5M392.5 717.5V846.5M397.5 717.5V846.5M406.5 717.5V846.5M410.5 717.5V846.5M415.5 717.5V846.5M420.5 717.5V846.5M429.5 717.5V846.5M433.5 717.5V846.5M438.5 717.5V846.5M442.5 717.5V846.5M451.5 717.5V846.5M456.5 717.5V846.5M460.5 717.5V846.5M465.5 717.5V846.5M474.5 717.5V846.5M479.5 717.5V846.5M483.5 717.5V846.5M488.5 717.5V846.5M40 718.5H493M40 722.5H493M40 726.5H493M40 730.5H493M40 734.5H493M40 738.5H493M40 742.5H493M40 750.5H493M40 754.5H493M40 758.5H493M40 763.5H493M40 767.5H493M40 771.5H493M40 775.5H493M40 779.5H493M40 783.5H493M40 791.5H493M40 795.5H493M40 799.5H493M40 803.5H493M40 807.5H493M40 811.5H493M40 815.5H493M40 819.5H493M40 823.5H493M40 831.5H493M40 835.5H493M40 839.5H493M40 844.5H493" stroke="#242424" stroke-width="1" fill="none" shape-rendering="crispEdges"/><path d="M40 746.5H493M40 787.5H493M40 827.5H493M60.5 717.5V846.5M83.5 717.5V846.5M106.5 717.5V846.5M129.5 717.5V846.5M151.5 717.5V846.5M174.5 717.5V846.5M197.5 717.5V846.5M220.5 717.5V846.5M242.5 717.5V846.5M288.5 717.5V846.5M310.5 717.5V846.5M333.5 717.5V846.5M356.5 717.5V846.5M379.5 717.5V846.5M401.5 717.5V846.5M424.5 717.5V846.5M447.5 717.5V846.5M470.5 717.5V846.5M492.5 717.5V846.5" stroke="#3a3a3a" stroke-width="1" fill="none" shape-rendering="crispEdges"/><path d="M65.5 717.5V846.5M165.5 717.5V846.5M265.5 717.5V846.5M360.5 717.5V846.5" stroke="#6e6e6e" stroke-width="1" fill="none" shape-rendering="crispEdges"/><path d="M43.9 785.5H46.5V787.8H43.9ZM48.2 787.8H51.2M53 786.6H55.6V787.8H53ZM57.5 777.5H60.1V787.8H57.5ZM62.1 767.5H64.7V787.8H62.1ZM66.6 756.7H69.2V787.8H66.6ZM71.2 748.5H73.8V787.8H71.2ZM75.7 744.4H78.3V787.8H75.7ZM80.3 753.3H82.9V787.8H80.3ZM84.8 763.3H87.4V787.8H84.8ZM89.2 787.8H92.2M93.9 787.8H96.5V800.6H93.9ZM98.5 787.8H101.1V813.7H98.5ZM103 787.8H105.6V819.5H103ZM107.5 787.8H110.1V819.5H107.5ZM112.1 787.8H114.7V818.3H112.1ZM116.6 787.8H119.2V809.5H116.6ZM121.2 787.8H123.8V801.4H121.2ZM125.7 787.8H128.3V795.7H125.7ZM130.1 787.8H133.1M134.8 786.3H137.4V787.8H134.8ZM139.4 784.1H142V787.8H139.4ZM143.9 785.2H146.5V787.8H143.9ZM148.3 787.8H151.3M153 786.3H155.6V787.8H153ZM157.6 783.2H160.2V787.8H157.6ZM162.1 786.3H164.7V787.8H162.1ZM166.4 787.8H169.4M171.2 787.8H173.8V788.8H171.2ZM175.7 787.8H178.3V791.8H175.7ZM180.3 787.8H182.9V799H180.3ZM184.8 787.8H187.4V799.5H184.8ZM189.4 787.8H192V802.1H189.4ZM193.9 787.8H196.5V801.4H193.9ZM198.5 787.8H201.1V795.7H198.5ZM203 787.8H205.6V788.8H203ZM207.6 787.8H210.2V790.6H207.6ZM212.1 787.8H214.7V794.4H212.1ZM216.6 787.8H219.2V797.5H216.6ZM221.2 787.8H223.8V798.3H221.2ZM225.7 787.8H228.3V800.6H225.7ZM230.3 787.8H232.9V800.6H230.3ZM234.8 787.8H237.4V795.7H234.8ZM239.2 787.8H242.2M243.9 784.1H246.5V787.8H243.9ZM248.5 780.3H251.1V787.8H248.5ZM253 780.3H255.6V787.8H253ZM257.6 780.3H260.2V787.8H257.6ZM262.1 781.3H264.7V787.8H262.1ZM266.7 774.1H269.3V787.8H266.7ZM271.2 768.2H273.8V787.8H271.2ZM275.7 763.3H278.3V787.8H275.7ZM280.3 764.4H282.9V787.8H280.3ZM284.8 766.7H287.4V787.8H284.8ZM289.4 767.5H292V787.8H289.4ZM293.9 772.6H296.5V787.8H293.9ZM298.5 779.8H301.1V787.8H298.5ZM302.8 787.8H305.8M307.6 787.8H310.2V790.6H307.6ZM312.1 787.8H314.7V794.4H312.1ZM316.7 787.8H319.3V792.6H316.7ZM321.2 787.8H323.8V793.7H321.2ZM325.8 787.8H328.4V794.4H325.8ZM330.3 787.8H332.9V792.1H330.3ZM334.8 787.8H337.4V792.4H334.8ZM339.4 787.8H342V792.8H339.4ZM343.9 787.8H346.5V793.3H343.9ZM348.5 787.8H351.1V795.2H348.5ZM353 787.8H355.6V799.5H353ZM357.6 787.8H360.2V803.7H357.6ZM362.1 787.8H364.7V802.1H362.1ZM366.7 787.8H369.3V797.5H366.7ZM371 787.8H374M375.8 784.4H378.4V787.8H375.8ZM380.3 784.7H382.9V787.8H380.3ZM384.7 787.8H387.7M389.4 787.8H392V788.8H389.4ZM393.9 787.8H396.5V794.4H393.9ZM398.5 787.8H401.1V796.4H398.5ZM403 787.8H405.6V794.4H403ZM407.6 787.8H410.2V791.3H407.6ZM411.9 787.8H414.9M416.7 787.8H419.3V793.3H416.7ZM421.2 787.8H423.8V793.3H421.2ZM425.8 787.8H428.4V792.4H425.8ZM430.3 787.8H432.9V790.6H430.3ZM434.7 787.8H437.7M439.4 783.2H442V787.8H439.4ZM443.9 779.3H446.5V787.8H443.9Z" fill="#202020" stroke="#a8a8a8" stroke-width=".9"/><polyline points="41.4,809 46,807.5 54.5,808.3 59.1,795.2 63.7,778.2 68.3,758.2 73,739.7 76.4,727.4 81.4,727.4 86.5,731.3 89.9,753.6 95.3,776.7 99.9,795.2 104.5,807.5 109.2,815.2 113.8,818.3 119.2,814.4 126.9,806 134.6,797.5 140.7,792.9 145.4,794.4 149.7,796.7 154.3,795.2 158.5,789.5 163.1,792.1 168.5,793.6 173.1,796.7 177.7,799.8 181.6,808.3 186.2,812.1 190.5,819.1 195.1,821.4 199.6,818.3 204.2,812.4 208.7,814.4 213.3,819.8 217.8,823.7 222.4,828.3 227,833.7 231.6,837.5 236.2,833.7 240.9,826 245,820.6 249.3,815.2 254.1,812.1 258.7,811 263.4,809.8 268,798.3 272.5,785.9 276.9,776.7 283.9,769 290,764.7 295.4,764.7 299.7,772.1 304.4,779.8 309.3,782.9 313.4,787.5 318.5,787.5 326.2,791 331.6,791.6 338.6,793.3 345.2,795.6 349.8,800.6 354.3,807.5 358.9,813.7 363.4,816.7 368,814.4 372.4,804.4 377.1,800.6 381.5,799.5 386.2,803.7 390.6,805.2 395.2,810.6 399.7,816.3 404.3,816.3 408.8,813.7 413.4,811.4 417.9,816.3 422.5,819.5 427,819.5 431.6,818.3 436.1,816.7 440.7,809 445.9,802.1" fill="none" stroke="#e80c0c" stroke-width="1.3" stroke-linejoin="round"/><polyline points="41.4,810.6 48.3,809.8 54.5,809.4 59.1,806 63.7,800.6 68.3,792.1 73,780.5 76.8,771.3 81.4,763.6 86.5,756.7 90.7,756.7 95.3,759.8 99.9,767.5 104.5,775.2 109.2,783.6 113.8,790.6 118.4,795.2 123,798.3 127.7,800.1 132.3,800.6 140.7,798.6 150,797.2 158.5,795.6 165.4,794.7 172.3,795.5 177.4,796 181.6,799 186.2,801.3 190.8,804.4 195.4,807.8 199.6,810.3 204.7,810.3 209.3,812.1 213.9,813.7 218.5,816 223.2,819.1 227.8,822.1 232.4,824.9 237,826.4 241.6,826.4 246.3,824.8 251.6,822.1 259.4,819.1 264.6,816 269.2,811.4 275.4,803.7 281.6,795.2 287.7,787.5 293.9,782.1 299.3,779.5 309.3,779.5 313.4,781.3 317.9,782.5 322.5,784.4 331.6,786.7 340.7,789.5 345.2,790.6 349.8,792.9 354.3,795.2 358.9,798.3 363.4,802.1 368,804.4 372.4,805.5 381.5,804 390.6,804 399.7,807.5 404.3,809.4 408.8,810.3 414.8,810.6 422.5,813.7 429.4,815.5 436.1,815.7 440.7,814.1 445.9,811.4" fill="none" stroke="#10c0c8" stroke-width="1.3" stroke-linejoin="round"/></svg><div style="left:495px;top:121.5px;width:64px;height:410px;overflow:hidden"><div class="t n ax" style="top:20.5px">105.000</div><div class="t n ax" style="top:55.5px">104.500</div><div class="t n ax" style="top:90.5px">104.000</div><div class="t n ax" style="top:125.5px">103.500</div><div class="t n ax" style="top:160.5px">103.000</div><div class="t n ax" style="top:195.5px">102.500</div><div class="t n ax" style="top:230.5px">102.000</div><div class="t n ax" style="top:265.5px">101.500</div><div class="t n ax" style="top:300.5px">101.000</div><div class="t n ax" style="top:335.5px">100.500</div><div class="t n ax" style="top:370.5px">100.000</div><div class="t n ax" style="top:405.5px">99.500</div></div><div class="t n r" style="left:40px;top:543.5px;line-height:14px">RSI:<span class="g" style="width:6px"></span><span style="color:#9a18e0"><span class="j">短期</span>[9]50.0052</span><span class="g"></span><span style="color:#f06a10"><span class="j">長期</span>[42]50.2367</span></div><div class="t n" style="left:495.5px;width:64px;text-align:center;top:588.9px;line-height:14px">70</div><div class="t n" style="left:495.5px;width:64px;text-align:center;top:615.9px;line-height:14px">50</div><div class="t n" style="left:495.5px;width:64px;text-align:center;top:642.9px;line-height:14px">30</div><div class="t n r" style="left:40px;top:701.5px;line-height:14px">MACD:<span class="g" style="width:6px"></span><span style="color:#e81010">MACD[12-26]-10.2101</span><span class="g"></span><span style="color:#12b4c4"><span class="k">シグナル</span>[9]-10.9123</span><span class="g"></span><span style="color:#a0a0a0"><span class="j">乖離</span>0.7022</span></div><div class="t n" style="left:495.5px;width:64px;text-align:center;top:739.7px;line-height:14px">20.0000</div><div class="t n" style="left:495.5px;width:64px;text-align:center;top:780.2px;line-height:14px">0.0000</div><div class="t n" style="left:495.5px;width:64px;text-align:center;top:820.7px;line-height:14px">-20.0000</div><div style="left:36.5px;top:850.5px;width:522px;height:1px;background:#b4b4b4"></div><div class="t n" style="left:39px;top:852px;line-height:15px"><span class="j">始値</span>:</div><div class="t n" style="left:115px;top:852px;line-height:15px"><span class="j">高値</span>:</div><div class="t n" style="left:191px;top:852px;line-height:15px"><span class="j">安値</span>:</div><div class="t n" style="left:231.5px;width:100px;text-align:right;top:852px;line-height:15px"><span class="j">終値</span>:101.844</div><div class="sb" style="left:336.5px;top:851.5px;width:16.5px;height:16px;"><i class="lf"></i></div><div class="trk" style="left:352.5px;top:851.5px;width:104px;height:16px;"></div><div class="thumb" style="left:422.2px;top:851.5px;width:14.5px;height:16px;"></div><div class="sb" style="left:456.5px;top:851.5px;width:16.5px;height:16px;"><i class="rt"></i></div><div style="left:473px;top:851.5px;width:22px;height:16px;background:#fff"><div class="t n" style="left:3.5px;top:1px;line-height:14px">100</div></div><div class="sb" style="left:495px;top:851.5px;width:16.5px;height:16px;"><i class="dn2"></i></div><div class="sb" style="left:526.5px;top:851.5px;width:16px;height:16px;"><i class="ph"></i><i class="pv"></i></div><div class="sb" style="left:543px;top:851.5px;width:16.5px;height:16px;"><i class="ph"></i></div></div><div class="win" style="left:568px;top:-4px;width:523.5px;height:884px"><div class="tb" style="left:0px;top:3px;width:523.5px;height:26px;"></div><div class="body" style="left:0px;top:29px;width:520px;height:852px;"></div><svg class="a" style="left:4px;top:9px" width="16" height="16" viewBox="0 0 16 16"><rect width="16" height="16" fill="#11295c"/><path d="M3.2 14V7.2L8 2.6L12.8 7.2V14H10.3V8.3L8 6.1L5.7 8.3V14Z" fill="#fff"/></svg><div class="t ttl" style="left:23.5px;top:9px;"><span class="k">チャート</span> : EUR/USD <span class="j">日足</span></div><div class="wb" style="left:358px;top:9px;width:47px;height:15.5px;"><span class="mn">MENU</span><i class="dn"></i></div><div class="wb" style="left:407.5px;top:9px;width:25px;height:15.5px;"><svg width="25" height="15" viewBox="0 0 25 15"><path d="M8.5 11.5L14.5 5.5" stroke="#858585" stroke-width="2"/><path d="M11.2 4H16V8.8Z" fill="#858585"/></svg></div><div class="wb" style="left:435px;top:9px;width:25.5px;height:15.5px;"><svg width="25" height="15" viewBox="0 0 25 15"><rect x="8.5" y="9.5" width="8" height="2" fill="#858585"/></svg></div><div class="wb" style="left:463px;top:9px;width:25.5px;height:15.5px;"><svg width="25" height="15" viewBox="0 0 25 15"><rect x="8.5" y="3.5" width="8" height="7" fill="none" stroke="#858585" stroke-width="1.2"/><rect x="8" y="3" width="9" height="2" fill="#858585"/></svg></div><div class="wb" style="left:491.5px;top:9px;width:25px;height:15.5px;"><svg width="25" height="15" viewBox="0 0 25 15"><path d="M9 3.5L16 10.5M16 3.5L9 10.5" stroke="#858585" stroke-width="2.1"/></svg></div><div class="sel" style="left:35px;top:36px;width:73.5px;height:20px;"><div class="t st" style="left:4px;top:0;line-height:18px">EUR/USD</div><div class="arr" style="width:16.5px"><i></i></div></div><div class="sel" style="left:115px;top:36px;width:63.5px;height:20px;"><div class="t st" style="left:4px;top:0;line-height:18px"><span class="j">日足</span></div><div class="arr" style="width:16.5px"><i></i></div></div><div class="sel" style="left:184px;top:36px;width:87.5px;height:20px;"><div class="t st" style="left:3px;top:0;line-height:18px"><span class="k">ローソク</span>(BID)</div><div class="arr" style="width:16.5px"><i></i></div></div><div class="sel" style="left:289px;top:36px;width:81.5px;height:20px;"><div class="t st" style="left:27px;top:0;line-height:18px">/ /</div><div class="arr" style="width:16.5px"><i></i></div></div><div class="btn" style="left:377px;top:36px;width:41.5px;height:20.5px;"><div class="t" style="left:0;width:100%;text-align:center;top:0;line-height:18px;color:#8a8a8a;font-size:12px"><span class="j">検索</span></div></div><div class="tool on" style="left:7px;top:64px;width:21.5px;height:21.5px;"><svg width="21" height="21" viewBox="0 0 21 21" style="position:absolute;left:-.5px;top:-.5px"><path d="M4 6.5H17.5M7.5 2.5V17.5" stroke="#444" stroke-width="1" fill="none"/><path d="M9.5 8V16L11.6 14.2L13 17.3L14.3 16.7L13 13.7H15.6Z" fill="#333"/></svg></div><div class="tool" style="left:7px;top:89px;width:21.5px;height:21.5px;"><svg width="21" height="21" viewBox="0 0 21 21" style="position:absolute;left:-.5px;top:-.5px"><path d="M4.6 15.4L5.6 12.6L14.6 3.6C15.1 3.1 15.8 3.1 16.3 3.6L16.9 4.2C17.4 4.7 17.4 5.4 16.9 5.9L7.9 14.9Z" fill="#505050"/><path d="M4.3 15.8L6.4 15.2L5 13.8Z" fill="#222"/><path d="M4.5 17.5H17" stroke="#666" stroke-width="1"/></svg></div><div class="tool" style="left:7px;top:114px;width:21.5px;height:21.5px;"><svg width="21" height="21" viewBox="0 0 21 21" style="position:absolute;left:-.5px;top:-.5px"><path d="M3.5 3V17.5H17.5" stroke="#444" fill="none"/><path d="M3 3.5H5M3 6.5H5M3 9.5H5M3 12.5H5M3 15.5H5" stroke="#444"/><path d="M5.5 10L8.5 4.5L11 9.5L13.5 4.5L16.5 10" stroke="#444" fill="none" stroke-width="1.1"/><path d="M5.5 13C7.5 11 9 11.5 11 13S14.5 14 16.5 12.5" stroke="#444" fill="none" stroke-width="1.1"/></svg></div><div class="tool" style="left:7px;top:139px;width:21.5px;height:21.5px;"><svg width="21" height="21" viewBox="0 0 21 21" style="position:absolute;left:-.5px;top:-.5px"><path d="M4.5 2.5V18M4.5 2.5H7M4.5 7.5H6.5M4.5 12.5H6.5M4.5 17.5H7" stroke="#444" fill="none"/><text x="6.6" y="10" font-size="7" font-family="Liberation Sans,sans-serif" fill="#333" textLength="12" lengthAdjust="spacingAndGlyphs">70.0</text><text x="6.6" y="17" font-size="7" font-family="Liberation Sans,sans-serif" fill="#333" textLength="12" lengthAdjust="spacingAndGlyphs">60.0</text></svg></div><div class="tool" style="left:7px;top:164px;width:21.5px;height:21.5px;"><svg width="21" height="21" viewBox="0 0 21 21" style="position:absolute;left:-.5px;top:-.5px"><circle cx="7" cy="6.8" r="3" fill="#666"/><path d="M5.3 6.8H8.7M7 5.1V8.5" stroke="#bbb" stroke-width=".8"/><path d="M14.3 3L15.3 5.6H18L15.8 7.3L16.6 10L14.3 8.4L12 10L12.8 7.3L10.6 5.6H13.3Z" fill="#444"/><path d="M7 17.5C3 14.5 3.5 11.5 5.3 11.5C6.3 11.5 7 12.4 7 12.4S7.7 11.5 8.7 11.5C10.5 11.5 11 14.5 7 17.5Z" fill="#444"/><circle cx="14.6" cy="14.5" r="3" fill="#666"/><path d="M12.9 14.5H16.3" stroke="#bbb" stroke-width=".9"/></svg></div><div class="tool" style="left:7px;top:189px;width:21.5px;height:21.5px;"><svg width="21" height="21" viewBox="0 0 21 21" style="position:absolute;left:-.5px;top:-.5px"><path d="M2.5 10.5C5 6.2 8 5 10.5 5S16 6.2 18.5 10.5C16 14.8 13 16 10.5 16S5 14.8 2.5 10.5Z" fill="#fff" stroke="#444" stroke-width="1.3"/><circle cx="10.5" cy="10" r="4" fill="#333"/><circle cx="9.3" cy="8.6" r="1.2" fill="#999"/></svg></div><div class="tool" style="left:7px;top:214px;width:21.5px;height:21.5px;"><svg width="21" height="21" viewBox="0 0 21 21" style="position:absolute;left:-.5px;top:-.5px"><rect x="6.5" y="3" width="8" height="5" fill="#e8e8e8" stroke="#666" stroke-width=".8"/><rect x="3" y="7.5" width="15" height="7" rx="1.5" fill="#5a5a5a"/><rect x="6" y="12" width="9" height="6" fill="#e4e4e4" stroke="#666" stroke-width=".8"/><rect x="14" y="9.3" width="2.5" height="1.2" fill="#ddd"/></svg></div><div class="tool" style="left:7px;top:239px;width:21.5px;height:21.5px;"><svg width="21" height="21" viewBox="0 0 21 21" style="position:absolute;left:-.5px;top:-.5px"><path d="M3.5 3.5H14.5V9H10V14.5H3.5Z" fill="#fff" stroke="#444"/><path d="M3.5 7H14.5M3.5 10.7H10M7.2 3.5V14.5M10.8 3.5V9" stroke="#444" fill="none"/><path d="M3.5 3.5H14.5" stroke="#444" stroke-width="2"/><path d="M10.5 10.5H16L17.5 12V18.5H10.5Z" fill="#444"/><rect x="12" y="14.5" width="4" height="3" fill="#eee"/><rect x="12.3" y="10.8" width="3" height="2.2" fill="#eee"/><path d="M4.5 15V17.5H8.5M7 16L8.8 17.5L7 19" stroke="#444" fill="none" stroke-width="1.1"/></svg></div><div class="pan" style="left:35.5px;top:63px;width:478px;height:474.5px;"></div><div style="left:35.5px;top:541px;width:478px;height:1px;background:#c2c2c2"></div><div class="pan" style="left:35.5px;top:546px;width:478px;height:150px;"></div><div style="left:35.5px;top:700px;width:478px;height:1px;background:#c2c2c2"></div><div class="pan" style="left:35.5px;top:704.5px;width:478px;height:167.5px;"></div><div style="left:36.5px;top:78px;width:476px;height:1px;background:#b4b4b4"></div><div style="left:36.5px;top:107px;width:476px;height:1px;background:#b4b4b4"></div><div class="t n r" style="left:39.5px;top:63.5px;line-height:14px"><span class="dd">2014/03/24</span><span class="g" style="width:8px"></span><span class="j">始値</span>:1.37989<span class="g" style="width:8px"></span><span class="j">高値</span>:1.38759<span class="g" style="width:8px"></span><span class="j">安値</span>:1.37604<span class="g" style="width:8px"></span><span class="j">終値</span>:1.38398</div><div style="left:37px;top:79px;width:475.5px;height:28px;overflow:hidden"><div class="t n r" style="left:3px;top:0px;line-height:14px"><span class="j">単純移動平均</span>:<span class="g" style="width:6px"></span><span style="color:#9a18e0"><span class="j">短期</span>[5]1.38348</span><span class="g"></span><span style="color:#f06a10"><span class="j">長期</span>[21]1.38156</span></div><div class="t n r" style="left:3px;top:13.5px;line-height:14px"><span class="k">ボリンジャーバンド</span>:<span class="g" style="width:6px"></span><span style="color:#0a28f0"><span class="j">基準線</span>[21]1.38156</span><span class="g"></span><span style="color:#1478f0"><span class="j">偏差</span>A<span class="j">上</span>[2.00]1.39677</span><span class="g"></span><span style="color:#1478f0"><span class="j">偏差</span>A<span class="j">下</span>[2.00]1.36635</span><span class="g"></span><span style="color:#5aa8f5"><span class="j">偏差</span>B<span class="j">上</span>[3.00]1.40438</span></div></div><div class="t d" style="left:150.5px;top:108px;line-height:13px">2014/05</div><div class="t d" style="left:241px;top:108px;line-height:13px">2014/06</div><div class="t d" style="left:327.5px;top:108px;line-height:13px">2014/07</div><div style="left:36.5px;top:107.5px;width:63px;height:13.5px;background:#2f4674;overflow:hidden"><div class="t d" style="left:0.5px;top:0.5px;line-height:13px;color:#fff">2014/03/24</div></div><svg class="a" style="left:0;top:0" width="520" height="884" viewBox="0 0 520 884" font-family='Liberation Sans,IPAGothic,sans-serif'><rect x="39" y="121" width="409" height="412.5" fill="#000"/><path d="M42.5 122V532.5M46.5 122V532.5M50.5 122V532.5M54.5 122V532.5M66.5 122V532.5M70.5 122V532.5M75.5 122V532.5M83.5 122V532.5M87.5 122V532.5M91.5 122V532.5M95.5 122V532.5M103.5 122V532.5M107.5 122V532.5M111.5 122V532.5M115.5 122V532.5M123.5 122V532.5M128.5 122V532.5M132.5 122V532.5M136.5 122V532.5M144.5 122V532.5M148.5 122V532.5M156.5 122V532.5M164.5 122V532.5M168.5 122V532.5M172.5 122V532.5M176.5 122V532.5M185.5 122V532.5M189.5 122V532.5M193.5 122V532.5M197.5 122V532.5M205.5 122V532.5M209.5 122V532.5M213.5 122V532.5M217.5 122V532.5M225.5 122V532.5M230.5 122V532.5M234.5 122V532.5M238.5 122V532.5M246.5 122V532.5M250.5 122V532.5M254.5 122V532.5M258.5 122V532.5M266.5 122V532.5M270.5 122V532.5M274.5 122V532.5M278.5 122V532.5M287.5 122V532.5M291.5 122V532.5M295.5 122V532.5M299.5 122V532.5M307.5 122V532.5M311.5 122V532.5M315.5 122V532.5M319.5 122V532.5M331.5 122V532.5M336.5 122V532.5M340.5 122V532.5M348.5 122V532.5M352.5 122V532.5M356.5 122V532.5M360.5 122V532.5M368.5 122V532.5M372.5 122V532.5M376.5 122V532.5M380.5 122V532.5M389.5 122V532.5M393.5 122V532.5M397.5 122V532.5M401.5 122V532.5M409.5 122V532.5M413.5 122V532.5M417.5 122V532.5M421.5 122V532.5M429.5 122V532.5M433.5 122V532.5M438.5 122V532.5M442.5 122V532.5M40 125.5H447M40 130.5H447M40 140.5H447M40 145.5H447M40 149.5H447M40 154.5H447M40 159.5H447M40 164.5H447M40 169.5H447M40 174.5H447M40 178.5H447M40 188.5H447M40 193.5H447M40 198.5H447M40 203.5H447M40 207.5H447M40 212.5H447M40 217.5H447M40 222.5H447M40 227.5H447M40 236.5H447M40 241.5H447M40 246.5H447M40 251.5H447M40 256.5H447M40 261.5H447M40 265.5H447M40 270.5H447M40 275.5H447M40 285.5H447M40 290.5H447M40 294.5H447M40 299.5H447M40 304.5H447M40 309.5H447M40 314.5H447M40 319.5H447M40 323.5H447M40 333.5H447M40 338.5H447M40 343.5H447M40 348.5H447M40 352.5H447M40 357.5H447M40 362.5H447M40 367.5H447M40 372.5H447M40 381.5H447M40 386.5H447M40 391.5H447M40 396.5H447M40 401.5H447M40 405.5H447M40 410.5H447M40 415.5H447M40 420.5H447M40 430.5H447M40 434.5H447M40 439.5H447M40 444.5H447M40 449.5H447M40 454.5H447M40 459.5H447M40 463.5H447M40 468.5H447M40 478.5H447M40 483.5H447M40 488.5H447M40 492.5H447M40 497.5H447M40 502.5H447M40 507.5H447M40 512.5H447M40 517.5H447M40 526.5H447M40 531.5H447" stroke="#242424" stroke-width="1" fill="none" shape-rendering="crispEdges"/><path d="M40 135.5H447M40 183.5H447M40 232.5H447M40 280.5H447M40 328.5H447M40 377.5H447M40 425.5H447M40 473.5H447M40 521.5H447M58.5 122V532.5M79.5 122V532.5M99.5 122V532.5M119.5 122V532.5M140.5 122V532.5M160.5 122V532.5M181.5 122V532.5M201.5 122V532.5M221.5 122V532.5M262.5 122V532.5M283.5 122V532.5M303.5 122V532.5M323.5 122V532.5M344.5 122V532.5M364.5 122V532.5M385.5 122V532.5M405.5 122V532.5M425.5 122V532.5M446.5 122V532.5" stroke="#3a3a3a" stroke-width="1" fill="none" shape-rendering="crispEdges"/><path d="M62.5 122V532.5M152.5 122V532.5M242.5 122V532.5M327.5 122V532.5" stroke="#6e6e6e" stroke-width="1" fill="none" shape-rendering="crispEdges"/><clipPath id="c2"><rect x="39" y="121" width="409" height="412.5"/></clipPath><g clip-path="url(#c2)"><path d="M41.1 243.7V299.2" stroke="#e8201c" stroke-width="1"/><rect x="39.5" y="263.4" width="3.2" height="17.3" fill="#e8201c"/><path d="M45.2 257.6V306.1" stroke="#4446d8" stroke-width="1"/><rect x="43.6" y="262.2" width="3.2" height="6.9" fill="#4446d8"/><path d="M49.3 266.8V292.3" stroke="#4446d8" stroke-width="1"/><rect x="47.7" y="269.2" width="3.2" height="20.8" fill="#4446d8"/><path d="M53.3 280.7V315.4" stroke="#4446d8" stroke-width="1"/><rect x="51.7" y="288.8" width="3.2" height="19.6" fill="#4446d8"/><path d="M57.4 293.4V325.7" stroke="#e8201c" stroke-width="1"/><rect x="55.8" y="302.6" width="3.2" height="6.9" fill="#e8201c"/><path d="M61.5 276.1V318.8" stroke="#e8201c" stroke-width="1"/><rect x="59.9" y="293.4" width="3.2" height="10.4" fill="#e8201c"/><path d="M65.6 272.6V296.9" stroke="#e8201c" stroke-width="1"/><rect x="64" y="284.2" width="3.2" height="9.2" fill="#e8201c"/><path d="M69.7 270.3V308.4" stroke="#4446d8" stroke-width="1"/><rect x="68.1" y="284.2" width="3.2" height="19.6" fill="#4446d8"/><path d="M73.7 277.2V325.7" stroke="#4446d8" stroke-width="1"/><rect x="72.1" y="296.9" width="3.2" height="23.1" fill="#4446d8"/><path d="M77.8 313V340.8" stroke="#4446d8" stroke-width="1"/><rect x="76.2" y="320" width="3.2" height="12.7" fill="#4446d8"/><path d="M81.9 308.4V336.1" stroke="#e8201c" stroke-width="1"/><rect x="80.3" y="309.6" width="3.2" height="21.9" fill="#e8201c"/><path d="M86 280.7V310.7" stroke="#e8201c" stroke-width="1"/><rect x="84.4" y="281.9" width="3.2" height="26.6" fill="#e8201c"/><path d="M90 249.5V291.1" stroke="#e8201c" stroke-width="1"/><rect x="88.4" y="254.1" width="3.2" height="28.9" fill="#e8201c"/><path d="M94.1 232.2V263.4" stroke="#e8201c" stroke-width="1"/><rect x="92.5" y="239.1" width="3.2" height="17.3" fill="#e8201c"/><path d="M98.2 229.4V250.7" stroke="#4446d8" stroke-width="1"/><rect x="96.6" y="239.1" width="3.2" height="1.6" fill="#4446d8"/><path d="M102.3 249.5V278.4" stroke="#4446d8" stroke-width="1"/><rect x="100.7" y="253" width="3.2" height="18.5" fill="#4446d8"/><path d="M106.4 263.4V285.3" stroke="#4446d8" stroke-width="1"/><rect x="104.8" y="270.3" width="3.2" height="4.6" fill="#4446d8"/><path d="M110.4 262.2V279.5" stroke="#e8201c" stroke-width="1"/><rect x="108.8" y="272.6" width="3.2" height="2.3" fill="#e8201c"/><path d="M114.5 249.5V276.1" stroke="#4446d8" stroke-width="1"/><rect x="112.9" y="272.6" width="3.2" height="2.3" fill="#4446d8"/><path d="M118.6 266.8V278.4" stroke="#e8201c" stroke-width="1"/><rect x="117" y="273.3" width="3.2" height="2.8" fill="#e8201c"/><path d="M122.7 265.7V286.5" stroke="#4446d8" stroke-width="1"/><rect x="121.1" y="272.6" width="3.2" height="9.2" fill="#4446d8"/><path d="M126.8 271.5V287.6" stroke="#e8201c" stroke-width="1"/><rect x="125.2" y="277.2" width="3.2" height="5.8" fill="#e8201c"/><path d="M130.8 254.1V280.7" stroke="#e8201c" stroke-width="1"/><rect x="129.2" y="271.9" width="3.2" height="6.5" fill="#e8201c"/><path d="M134.9 259.9V284.2" stroke="#e8201c" stroke-width="1"/><rect x="133.3" y="264.5" width="3.2" height="9.2" fill="#e8201c"/><path d="M139 257.6V269.2" stroke="#e8201c" stroke-width="1"/><rect x="137.4" y="264.1" width="3.2" height="2.8" fill="#e8201c"/><path d="M143.1 242.6V271.5" stroke="#e8201c" stroke-width="1"/><rect x="141.5" y="256" width="3.2" height="8.5" fill="#e8201c"/><path d="M147.2 242.6V277.2" stroke="#4446d8" stroke-width="1"/><rect x="145.6" y="256" width="3.2" height="18.9" fill="#4446d8"/><path d="M151.2 243.7V294.6" stroke="#e8201c" stroke-width="1"/><rect x="149.6" y="247.7" width="3.2" height="28.4" fill="#e8201c"/><path d="M155.3 236.8V251.8" stroke="#e8201c" stroke-width="1"/><rect x="153.7" y="246.7" width="3.2" height="2.8" fill="#e8201c"/><path d="M159.4 240.3V273.8" stroke="#e8201c" stroke-width="1"/><rect x="157.8" y="245.6" width="3.2" height="2.8" fill="#e8201c"/><path d="M163.5 239.1V251.8" stroke="#e8201c" stroke-width="1"/><rect x="161.9" y="243.7" width="3.2" height="3.5" fill="#e8201c"/><path d="M167.5 207.9V246.1" stroke="#e8201c" stroke-width="1"/><rect x="165.9" y="219" width="3.2" height="25.9" fill="#e8201c"/><path d="M171.6 213.2V228.7" stroke="#4446d8" stroke-width="1"/><rect x="170" y="219.5" width="3.2" height="8.1" fill="#4446d8"/><path d="M175.7 187.1V264.5" stroke="#4446d8" stroke-width="1"/><rect x="174.1" y="226" width="3.2" height="36.3" fill="#4446d8"/><path d="M179.8 257.6V306.1" stroke="#4446d8" stroke-width="1"/><rect x="178.2" y="257.6" width="3.2" height="43.9" fill="#4446d8"/><path d="M183.9 292.3V305" stroke="#e8201c" stroke-width="1"/><rect x="182.3" y="301" width="3.2" height="1.6" fill="#e8201c"/><path d="M187.9 294.6V338.5" stroke="#4446d8" stroke-width="1"/><rect x="186.3" y="301.5" width="3.2" height="26.6" fill="#4446d8"/><path d="M192 313V335" stroke="#e8201c" stroke-width="1"/><rect x="190.4" y="322.3" width="3.2" height="11.6" fill="#e8201c"/><path d="M196.1 317.7V352.3" stroke="#4446d8" stroke-width="1"/><rect x="194.5" y="322.3" width="3.2" height="5.8" fill="#4446d8"/><path d="M200.2 316.5V339.6" stroke="#4446d8" stroke-width="1"/><rect x="198.6" y="323.4" width="3.2" height="11.6" fill="#4446d8"/><path d="M204.3 313V336.1" stroke="#e8201c" stroke-width="1"/><rect x="202.7" y="322.3" width="3.2" height="12.7" fill="#e8201c"/><path d="M208.3 321.1V343.1" stroke="#4446d8" stroke-width="1"/><rect x="206.7" y="324.6" width="3.2" height="9.2" fill="#4446d8"/><path d="M212.4 324V356.3" stroke="#4446d8" stroke-width="1"/><rect x="210.8" y="327.5" width="3.2" height="8.1" fill="#4446d8"/><path d="M216.5 334.4V354" stroke="#4446d8" stroke-width="1"/><rect x="214.9" y="335.6" width="3.2" height="13.9" fill="#4446d8"/><path d="M220.6 342.5V369" stroke="#4446d8" stroke-width="1"/><rect x="219" y="349.4" width="3.2" height="12.7" fill="#4446d8"/><path d="M224.7 349.4V370.2" stroke="#e8201c" stroke-width="1"/><rect x="223.1" y="354" width="3.2" height="12.7" fill="#e8201c"/><path d="M228.7 343.6V370.2" stroke="#4446d8" stroke-width="1"/><rect x="227.1" y="356.3" width="3.2" height="4.6" fill="#4446d8"/><path d="M232.8 358.7V382.9" stroke="#4446d8" stroke-width="1"/><rect x="231.2" y="361" width="3.2" height="19.6" fill="#4446d8"/><path d="M236.9 363.3V384.1" stroke="#e8201c" stroke-width="1"/><rect x="235.3" y="376" width="3.2" height="5.8" fill="#e8201c"/><path d="M241 351.7V378.3" stroke="#e8201c" stroke-width="1"/><rect x="239.4" y="359.8" width="3.2" height="17.3" fill="#e8201c"/><path d="M245 358.7V382.9" stroke="#4446d8" stroke-width="1"/><rect x="243.4" y="361" width="3.2" height="17.3" fill="#4446d8"/><path d="M249.1 354V385.2" stroke="#4446d8" stroke-width="1"/><rect x="247.5" y="364.4" width="3.2" height="13.9" fill="#4446d8"/><path d="M253.2 357.5V379.4" stroke="#4446d8" stroke-width="1"/><rect x="251.6" y="364.4" width="3.2" height="12.7" fill="#4446d8"/><path d="M257.3 342.9V423.8" stroke="#e8201c" stroke-width="1"/><rect x="255.7" y="345.2" width="3.2" height="32.3" fill="#e8201c"/><path d="M261.4 339.4V363.7" stroke="#4446d8" stroke-width="1"/><rect x="259.8" y="346.4" width="3.2" height="10.4" fill="#4446d8"/><path d="M265.4 344.1V384.5" stroke="#4446d8" stroke-width="1"/><rect x="263.8" y="355.6" width="3.2" height="24.3" fill="#4446d8"/><path d="M269.5 376.4V406.4" stroke="#4446d8" stroke-width="1"/><rect x="267.9" y="379.9" width="3.2" height="23.1" fill="#4446d8"/><path d="M273.6 396V414.5" stroke="#4446d8" stroke-width="1"/><rect x="272" y="403" width="3.2" height="8.1" fill="#4446d8"/><path d="M277.7 399.5V419.1" stroke="#e8201c" stroke-width="1"/><rect x="276.1" y="400.7" width="3.2" height="10.4" fill="#e8201c"/><path d="M281.8 386.8V408.7" stroke="#4446d8" stroke-width="1"/><rect x="280.2" y="400.7" width="3.2" height="4.6" fill="#4446d8"/><path d="M285.8 386.8V419.1" stroke="#e8201c" stroke-width="1"/><rect x="284.2" y="389.1" width="3.2" height="17.3" fill="#e8201c"/><path d="M289.9 383.3V408.7" stroke="#4446d8" stroke-width="1"/><rect x="288.3" y="389.1" width="3.2" height="12.7" fill="#4446d8"/><path d="M294 378.7V406.4" stroke="#e8201c" stroke-width="1"/><rect x="292.4" y="379.9" width="3.2" height="24.3" fill="#e8201c"/><path d="M298.1 355.6V384.5" stroke="#e8201c" stroke-width="1"/><rect x="296.5" y="372.9" width="3.2" height="8.1" fill="#e8201c"/><path d="M302.2 360.2V393.7" stroke="#4446d8" stroke-width="1"/><rect x="300.6" y="372.9" width="3.2" height="5.8" fill="#4446d8"/><path d="M306.2 370.6V388" stroke="#e8201c" stroke-width="1"/><rect x="304.6" y="376.4" width="3.2" height="3.5" fill="#e8201c"/><path d="M310.3 362.5V385.6" stroke="#e8201c" stroke-width="1"/><rect x="308.7" y="372.9" width="3.2" height="4.6" fill="#e8201c"/><path d="M314.4 352.1V375.2" stroke="#e8201c" stroke-width="1"/><rect x="312.8" y="362.5" width="3.2" height="10.4" fill="#e8201c"/><path d="M318.5 357.9V388" stroke="#4446d8" stroke-width="1"/><rect x="316.9" y="363.7" width="3.2" height="9.2" fill="#4446d8"/><path d="M322.6 352.1V374.1" stroke="#e8201c" stroke-width="1"/><rect x="321" y="354.5" width="3.2" height="18.5" fill="#e8201c"/><path d="M326.6 330.2V357.9" stroke="#e8201c" stroke-width="1"/><rect x="325" y="331.4" width="3.2" height="24.3" fill="#e8201c"/><path d="M330.7 327.9V341.8" stroke="#4446d8" stroke-width="1"/><rect x="329.1" y="331.4" width="3.2" height="8.1" fill="#4446d8"/><path d="M334.8 337.1V357.9" stroke="#4446d8" stroke-width="1"/><rect x="333.2" y="338.3" width="3.2" height="10.4" fill="#4446d8"/><path d="M338.9 346.4V375.2" stroke="#4446d8" stroke-width="1"/><rect x="337.3" y="347.5" width="3.2" height="25.4" fill="#4446d8"/><path d="M342.9 370.6V384.5" stroke="#4446d8" stroke-width="1"/><rect x="341.3" y="371.8" width="3.2" height="4.6" fill="#4446d8"/><path d="M347 372.9V388" stroke="#e8201c" stroke-width="1"/><rect x="345.4" y="375.2" width="3.2" height="5.8" fill="#e8201c"/><path d="M351.1 369.5V382.2" stroke="#e8201c" stroke-width="1"/><rect x="349.5" y="370.6" width="3.2" height="5.8" fill="#e8201c"/><path d="M355.2 353.3V372.9" stroke="#e8201c" stroke-width="1"/><rect x="353.6" y="356.8" width="3.2" height="13.9" fill="#e8201c"/><path d="M359.3 352.1V381" stroke="#4446d8" stroke-width="1"/><rect x="357.7" y="356.8" width="3.2" height="16.2" fill="#4446d8"/><path d="M363.3 364.9V381" stroke="#e8201c" stroke-width="1"/><rect x="361.7" y="366" width="3.2" height="6.9" fill="#e8201c"/><path d="M367.4 356.8V377.6" stroke="#e8201c" stroke-width="1"/><rect x="365.8" y="367.2" width="3.2" height="8.1" fill="#e8201c"/><path d="M371.5 363.7V394.9" stroke="#4446d8" stroke-width="1"/><rect x="369.9" y="367.2" width="3.2" height="24.3" fill="#4446d8"/><path d="M375.6 390.3V415.7" stroke="#4446d8" stroke-width="1"/><rect x="374" y="391.4" width="3.2" height="20.8" fill="#4446d8"/><path d="M379.7 405.3V416.8" stroke="#e8201c" stroke-width="1"/><rect x="378.1" y="411.7" width="3.2" height="1.6" fill="#e8201c"/><path d="M383.7 407.6V429.5" stroke="#e8201c" stroke-width="1"/><rect x="382.1" y="411.7" width="3.2" height="1.6" fill="#e8201c"/><path d="M387.8 401.8V420.3" stroke="#4446d8" stroke-width="1"/><rect x="386.2" y="413.4" width="3.2" height="2.3" fill="#4446d8"/><path d="M391.9 412.2V445.7" stroke="#4446d8" stroke-width="1"/><rect x="390.3" y="414.5" width="3.2" height="28.9" fill="#4446d8"/><path d="M396 437.6V448" stroke="#4446d8" stroke-width="1"/><rect x="394.4" y="442.2" width="3.2" height="2.3" fill="#4446d8"/><path d="M400.1 433V456.1" stroke="#e8201c" stroke-width="1"/><rect x="398.5" y="442.9" width="3.2" height="1.6" fill="#e8201c"/><path d="M404.1 435.3V463" stroke="#4446d8" stroke-width="1"/><rect x="402.5" y="442.2" width="3.2" height="17.3" fill="#4446d8"/><polyline points="40.2,162.9 47.6,165.2 56.8,173.3 61.4,173.7 68.3,177.4 77.6,172.6 85.7,177.9 92.6,179.5 97.2,178.6 103,192.9 109.9,210.2 118,211.4 128.4,213.2 137.6,211.4 144.6,209.1 153.8,202.2 158.4,205.6 161.9,212.1 167.7,207.9 174.6,204.5 182.7,202.2 188.5,190.6 200,175.6 211.6,166.4 220.8,159.4 227.7,158.7 232.4,155.5 238.9,166.4 245.9,181.4 250.5,202.2 255.1,234.5 259.7,270.3 270.1,284.2 273.6,282.3 281.7,288.8 289.8,301.5 297.8,316.5 305.9,324.6 314,328.1 322.1,320 329,309.6 334.8,306.1 339.4,306.8 345.2,311.9 354.4,311.4 361.4,316.5 368.3,321.6 372.9,321.1 379.8,313 389.1,303.8 396,288.8 405.3,278.4" fill="none" stroke="#5aa2e6" stroke-width="1.1" stroke-linejoin="round"/><polyline points="40.2,384.5 47.6,376 56.8,361.7 60.3,363.3 66,356.3 70.7,355.9 75.3,365.6 79.9,373.2 89.1,373.2 97.2,372.5 103,366.7 109.9,355.2 121.5,353.6 134.2,352.2 142.3,347.1 146.9,344.3 151.5,345.3 156.1,340.2 160.7,326.3 161.9,317.7 167.7,313 174.6,313 179.2,320 183.8,329 188.5,344.8 197.7,365.6 206.9,384.1 216.2,404.9 225.4,428 234.7,460.3 243.9,467.2 248.5,462.6 254.3,439.5 258.9,419.9 264.7,419.2 266.7,420.3 273.6,431.8 281.7,441.1 288.6,444.5 297.8,435.3 310.5,431.8 319.8,431.8 329,439.2 337.1,442.7 349.8,439.9 357.9,431.8 367.1,417.5 372.9,418 379.8,431.8 389.1,454.9 396,473.4 402.9,491.9 405.3,498.8" fill="none" stroke="#5aa2e6" stroke-width="1.1" stroke-linejoin="round"/><polyline points="40.2,199.2 47.6,200.3 56.8,205.2 68.3,207.2 76.4,204.5 85.7,210.2 92.6,210.9 97.2,210.2 103,220.6 109.9,233.8 118,235.2 129.6,237.3 140,233.3 146.9,231 155,225.3 161.9,229.2 165.4,228.7 170,222.3 182.7,223 188.5,217.2 200,209.6 211.6,205.6 220.8,202.6 228.9,206.3 232.4,205.6 238.9,216 245.9,229.9 250.5,243.7 255.1,269.2 259.7,295.7 270.1,308.4 273.6,307.3 281.7,313 294.4,330.2 303.6,341.8 312.9,345.2 322.1,341.8 329,331.4 337.1,329.5 345.2,333.7 354.4,332.5 363.7,336.7 370.6,337.6 379.8,332.5 389.1,325.6 396,319.8 405.3,315.2" fill="none" stroke="#1a78dc" stroke-width="1.1" stroke-linejoin="round"/><polyline points="40.2,346.4 47.6,339 56.8,330.9 61.4,330.9 68.3,325.8 74.1,332.1 79.9,340.2 89.1,340.2 97.2,340.2 103,336.7 109.9,330.5 121.5,329.1 133,328.2 144.6,322.3 153.8,321.1 158.4,308.4 164.2,296.9 168.8,294.6 175.8,294.6 180.4,301.5 183.8,310.7 188.5,324 195.4,335.6 202.3,347.1 211.6,361 220.8,379.4 230,400.2 237,411.8 243.9,418.2 248.5,418.7 254.3,409.5 258.9,396.8 263.5,395.1 267,397.9 273.6,408.7 281.7,418 288.6,420.3 297.8,416.1 310.5,414.5 322.1,414.5 329,418 337.1,420.3 349.8,418.4 357.9,412.2 367.1,401.8 372.9,401.8 378.7,413.4 386.8,427.2 393.7,441.1 400.6,453.8 405.3,461.9" fill="none" stroke="#1a78dc" stroke-width="1.1" stroke-linejoin="round"/><polyline points="40.2,271.5 47.6,269.2 59.1,267.3 71.8,266.1 78.7,271 85.7,275.6 97.2,275.6 105.3,280.7 114.5,283 124.9,283.5 134.2,283 142.3,278.4 151.5,274.9 158.4,269.2 166.5,262.2 172.3,258.3 176.9,258.8 183.8,264.5 193.1,271.5 202.3,277.2 211.6,283 220.8,291.1 230,301.5 239.3,314.2 242.4,316.3 252.8,331.4 262,344.1 272.4,357.9 282.8,368.3 293.2,376.4 303.6,378.7 315.2,378.7 326.7,375.9 336,374.1 347.5,375.2 357.9,372.9 367.1,369.9 375.2,369.5 384.5,374.1 393.7,381 405.3,389.8" fill="none" stroke="#e0661c" stroke-width="1.1" stroke-linejoin="round"/><polyline points="40.2,262.2 45.2,273.8 52.2,284.2 59.1,291.1 68.3,296.9 74.1,301.5 79.9,306.6 85.7,308 90.3,296.9 93.8,280.7 97.2,266.8 101.8,257.6 105.3,255.3 109.9,257.6 114.5,266.8 120.3,273.8 128.4,276.5 135.3,273.8 142.3,268 149.2,261.1 156.1,255.3 163.1,248.4 167.7,240.3 171.8,237.3 176.9,241.4 181.5,255.3 186.2,276.1 190.8,296.9 195.4,313 202.3,322.3 205.8,325.2 213.9,330.9 220.8,340.2 227.7,351.7 234.7,363.3 241.6,370.2 247.4,372 253.1,369 258.9,365.1 264.7,366.7 266.7,369.5 272.4,381 278.2,394.9 284,401.8 289.8,403 295.5,397.2 301.3,388 308.2,379.9 315.2,372.9 322.1,364.9 329,353.3 334.8,349.8 339.4,351 345.2,360.2 352.1,369.5 359.1,371.8 366,369.9 370.6,370.6 375.2,383.3 382.2,399.5 389.1,413.4 396,424.9 402.9,436.5 405.3,438.8" fill="none" stroke="#9a18e0" stroke-width="1.2" stroke-linejoin="round"/><path d="M39 458.5H448" stroke="#f7941d" stroke-width="1" shape-rendering="crispEdges"/><text x="175.4" y="187.6" font-size="11" fill="#f07814" text-anchor="middle" letter-spacing=".35">1.39933</text><text x="76.4" y="358.6" font-size="11" fill="#18c818" text-anchor="middle" letter-spacing=".35">1.36723</text><text x="330.2" y="327.9" font-size="11" fill="#f07814" text-anchor="middle" letter-spacing=".35">1.37000</text><text x="256.3" y="439.2" font-size="11" fill="#18c818" text-anchor="middle" letter-spacing=".35">1.35030</text><text x="403.6" y="479.2" font-size="11" fill="#18c818" text-anchor="middle" letter-spacing=".35">1.34211</text></g><rect x="448" y="449" width="65" height="18.5" fill="#f7941d"/><text x="481" y="462.5" font-size="11" fill="#fff" text-anchor="middle" letter-spacing="-.4">1.34298</text><rect x="39" y="560.5" width="409" height="132.0" fill="#000"/><path d="M42.5 561.5V691.5M46.5 561.5V691.5M50.5 561.5V691.5M54.5 561.5V691.5M66.5 561.5V691.5M70.5 561.5V691.5M75.5 561.5V691.5M83.5 561.5V691.5M87.5 561.5V691.5M91.5 561.5V691.5M95.5 561.5V691.5M103.5 561.5V691.5M107.5 561.5V691.5M111.5 561.5V691.5M115.5 561.5V691.5M123.5 561.5V691.5M128.5 561.5V691.5M132.5 561.5V691.5M136.5 561.5V691.5M144.5 561.5V691.5M148.5 561.5V691.5M156.5 561.5V691.5M164.5 561.5V691.5M168.5 561.5V691.5M172.5 561.5V691.5M176.5 561.5V691.5M185.5 561.5V691.5M189.5 561.5V691.5M193.5 561.5V691.5M197.5 561.5V691.5M205.5 561.5V691.5M209.5 561.5V691.5M213.5 561.5V691.5M217.5 561.5V691.5M225.5 561.5V691.5M230.5 561.5V691.5M234.5 561.5V691.5M238.5 561.5V691.5M246.5 561.5V691.5M250.5 561.5V691.5M254.5 561.5V691.5M258.5 561.5V691.5M266.5 561.5V691.5M270.5 561.5V691.5M274.5 561.5V691.5M278.5 561.5V691.5M287.5 561.5V691.5M291.5 561.5V691.5M295.5 561.5V691.5M299.5 561.5V691.5M307.5 561.5V691.5M311.5 561.5V691.5M315.5 561.5V691.5M319.5 561.5V691.5M331.5 561.5V691.5M336.5 561.5V691.5M340.5 561.5V691.5M348.5 561.5V691.5M352.5 561.5V691.5M356.5 561.5V691.5M360.5 561.5V691.5M368.5 561.5V691.5M372.5 561.5V691.5M376.5 561.5V691.5M380.5 561.5V691.5M389.5 561.5V691.5M393.5 561.5V691.5M397.5 561.5V691.5M401.5 561.5V691.5M409.5 561.5V691.5M413.5 561.5V691.5M417.5 561.5V691.5M421.5 561.5V691.5M429.5 561.5V691.5M433.5 561.5V691.5M438.5 561.5V691.5M442.5 561.5V691.5M40 562.5H447M40 565.5H447M40 568.5H447M40 572.5H447M40 575.5H447M40 578.5H447M40 582.5H447M40 585.5H447M40 588.5H447M40 592.5H447M40 595.5H447M40 602.5H447M40 605.5H447M40 608.5H447M40 612.5H447M40 615.5H447M40 619.5H447M40 622.5H447M40 629.5H447M40 632.5H447M40 635.5H447M40 639.5H447M40 642.5H447M40 645.5H447M40 649.5H447M40 655.5H447M40 659.5H447M40 662.5H447M40 665.5H447M40 669.5H447M40 672.5H447M40 675.5H447M40 679.5H447M40 682.5H447M40 686.5H447M40 689.5H447" stroke="#242424" stroke-width="1" fill="none" shape-rendering="crispEdges"/><path d="M40 598.5H447M40 625.5H447M40 652.5H447M58.5 561.5V691.5M79.5 561.5V691.5M99.5 561.5V691.5M119.5 561.5V691.5M140.5 561.5V691.5M160.5 561.5V691.5M181.5 561.5V691.5M201.5 561.5V691.5M221.5 561.5V691.5M262.5 561.5V691.5M283.5 561.5V691.5M303.5 561.5V691.5M323.5 561.5V691.5M344.5 561.5V691.5M364.5 561.5V691.5M385.5 561.5V691.5M405.5 561.5V691.5M425.5 561.5V691.5M446.5 561.5V691.5" stroke="#3a3a3a" stroke-width="1" fill="none" shape-rendering="crispEdges"/><path d="M62.5 561.5V691.5M152.5 561.5V691.5M242.5 561.5V691.5M327.5 561.5V691.5" stroke="#6e6e6e" stroke-width="1" fill="none" shape-rendering="crispEdges"/><polyline points="40.3,623.5 44.5,626.6 48.3,635.1 52.6,642.5 56.8,638.9 60.6,633.6 64.5,629.7 68.3,635.9 72.5,644.3 76.5,647.4 80.7,635.1 85,622.8 89.1,612 93.8,606.1 97.6,607.4 101.5,624.3 105.3,625.5 117.6,625.5 121.5,632.5 126.1,628.2 130.3,624.3 134.6,618.5 138.4,618.2 142.3,611.7 146.4,630.2 150.8,611.5 155.4,611.2 159.2,610.1 162.3,609.2 166.6,596.3 170.8,605.1 174.6,627.4 179.3,648.2 183.6,648.2 187.7,657.4 191.6,652.4 195.4,653.1 199.3,655.4 203.6,649.4 207.7,651.3 211.6,654 216.2,661 220.5,664.4 224.7,657.4 228.5,659.4 232.4,666.7 236.6,660.5 240.5,644.3 244.3,653.6 248.6,640.5 252.8,647.4 256.6,626.6 261.3,633.6 265.1,641.3 269.7,650.5 273.6,653.6 277.4,646.7 281.3,648.2 285.5,637.4 289.8,643.6 293.6,628.2 297.5,624.3 302.1,627.4 305.9,626.3 310.3,624.3 314.4,617.4 318.6,624.3 322.9,612 326.7,602.4 330.6,608.9 334.9,617.4 338.3,632 342.6,636.6 346.8,633.6 350.9,630.5 355.5,618.9 359.5,631.2 363.7,631.2 367.6,627.1 371.4,642.8 375.6,652.4 387.6,652.4 391.4,664.4 400.7,664.4 404.8,669.8" fill="none" stroke="#8a10e0" stroke-width="1.3" stroke-linejoin="round"/><polyline points="40.3,620.5 44.5,622 52.6,625.5 56.8,624.3 64.5,622.5 72.5,626.6 76.5,627.4 80.7,625.5 85,622.8 89.1,620.8 93.8,619.4 97.6,619.4 101.5,622.5 117.6,622.5 121.5,623.5 126.1,623.2 130.3,622.3 138.4,622.3 142.3,621.5 146.4,623.5 150.8,620.8 162.3,620.6 166.6,617.4 170.8,618.6 174.6,622 179.3,627.4 183.6,627.4 187.7,630.5 191.6,629.7 195.4,629.7 199.3,630.5 203.6,629.7 207.7,630.5 211.6,630.5 216.2,632.5 220.5,633.6 224.7,632.5 228.5,633.6 232.4,635.4 236.6,634.3 240.5,632.5 244.3,634.3 248.6,632.5 252.8,634.6 256.6,630.5 261.3,632 265.1,634.3 269.7,636.6 273.6,637.7 277.4,635.4 281.3,636.6 285.5,634.6 289.8,635.4 293.6,632.5 297.5,631.6 302.1,632.5 305.9,632.5 310.3,631.6 314.4,630.5 318.6,631.6 322.9,629.4 326.7,626.3 330.6,627.4 334.9,628.6 338.3,631.6 346.8,631.6 350.9,630.5 355.5,629.4 359.5,630.5 367.6,630.5 371.4,633.6 375.6,635.4 387.6,635.4 391.4,638.5 400.7,638.5 404.8,640.5" fill="none" stroke="#e8660c" stroke-width="1.3" stroke-linejoin="round"/><rect x="39" y="719.5" width="409" height="132.0" fill="#000"/><path d="M42.5 720.5V850.5M46.5 720.5V850.5M50.5 720.5V850.5M54.5 720.5V850.5M66.5 720.5V850.5M70.5 720.5V850.5M75.5 720.5V850.5M83.5 720.5V850.5M87.5 720.5V850.5M91.5 720.5V850.5M95.5 720.5V850.5M103.5 720.5V850.5M107.5 720.5V850.5M111.5 720.5V850.5M115.5 720.5V850.5M123.5 720.5V850.5M128.5 720.5V850.5M132.5 720.5V850.5M136.5 720.5V850.5M144.5 720.5V850.5M148.5 720.5V850.5M156.5 720.5V850.5M164.5 720.5V850.5M168.5 720.5V850.5M172.5 720.5V850.5M176.5 720.5V850.5M185.5 720.5V850.5M189.5 720.5V850.5M193.5 720.5V850.5M197.5 720.5V850.5M205.5 720.5V850.5M209.5 720.5V850.5M213.5 720.5V850.5M217.5 720.5V850.5M225.5 720.5V850.5M230.5 720.5V850.5M234.5 720.5V850.5M238.5 720.5V850.5M246.5 720.5V850.5M250.5 720.5V850.5M254.5 720.5V850.5M258.5 720.5V850.5M266.5 720.5V850.5M270.5 720.5V850.5M274.5 720.5V850.5M278.5 720.5V850.5M287.5 720.5V850.5M291.5 720.5V850.5M295.5 720.5V850.5M299.5 720.5V850.5M307.5 720.5V850.5M311.5 720.5V850.5M315.5 720.5V850.5M319.5 720.5V850.5M331.5 720.5V850.5M336.5 720.5V850.5M340.5 720.5V850.5M348.5 720.5V850.5M352.5 720.5V850.5M356.5 720.5V850.5M360.5 720.5V850.5M368.5 720.5V850.5M372.5 720.5V850.5M376.5 720.5V850.5M380.5 720.5V850.5M389.5 720.5V850.5M393.5 720.5V850.5M397.5 720.5V850.5M401.5 720.5V850.5M409.5 720.5V850.5M413.5 720.5V850.5M417.5 720.5V850.5M421.5 720.5V850.5M429.5 720.5V850.5M433.5 720.5V850.5M438.5 720.5V850.5M442.5 720.5V850.5M40 723.5H447M40 734.5H447M40 739.5H447M40 745.5H447M40 750.5H447M40 755.5H447M40 761.5H447M40 766.5H447M40 771.5H447M40 777.5H447M40 787.5H447M40 793.5H447M40 798.5H447M40 803.5H447M40 809.5H447M40 814.5H447M40 819.5H447M40 825.5H447M40 830.5H447M40 841.5H447M40 846.5H447" stroke="#242424" stroke-width="1" fill="none" shape-rendering="crispEdges"/><path d="M40 729.5H447M40 782.5H447M40 836.5H447M58.5 720.5V850.5M79.5 720.5V850.5M99.5 720.5V850.5M119.5 720.5V850.5M140.5 720.5V850.5M160.5 720.5V850.5M181.5 720.5V850.5M201.5 720.5V850.5M221.5 720.5V850.5M262.5 720.5V850.5M283.5 720.5V850.5M303.5 720.5V850.5M323.5 720.5V850.5M344.5 720.5V850.5M364.5 720.5V850.5M385.5 720.5V850.5M405.5 720.5V850.5M425.5 720.5V850.5M446.5 720.5V850.5" stroke="#3a3a3a" stroke-width="1" fill="none" shape-rendering="crispEdges"/><path d="M62.5 720.5V850.5M152.5 720.5V850.5M242.5 720.5V850.5M327.5 720.5V850.5" stroke="#6e6e6e" stroke-width="1" fill="none" shape-rendering="crispEdges"/><path d="M39.9 783H42.3V794.1H39.9ZM44 783H46.4V795.3H44ZM48.1 783H50.5V798.7H48.1ZM52.1 783H54.5V802.6H52.1ZM56.2 783H58.6V804.6H56.2ZM60.3 783H62.7V802.6H60.3ZM64.4 783H66.8V799.5H64.4ZM68.5 783H70.9V799.5H68.5ZM72.5 783H74.9V801.5H72.5ZM76.6 783H79V802.6H76.6ZM80.7 783H83.1V800.3H80.7ZM84.8 783H87.2V794.6H84.8ZM88.8 783H91.2V785.2H88.8ZM92.9 778.7H95.3V783H92.9ZM97 774.5H99.4V783H97ZM101.1 776.4H103.5V783H101.1ZM105.2 779.5H107.6V783H105.2ZM109.2 780.5H111.6V783H109.2ZM113 783H116M117.1 783H120.1M121.5 783H123.9V784H121.5ZM125.6 783H128V784H125.6ZM129.6 783H132V784H129.6ZM133.4 783H136.4M137.5 783H140.5M141.9 781H144.3V783H141.9ZM145.7 783H148.7M150 781.5H152.4V783H150ZM154.1 779.5H156.5V783H154.1ZM158.2 778.4H160.6V783H158.2ZM162.3 778.4H164.7V783H162.3ZM166.3 775.3H168.7V783H166.3ZM170.4 774.5H172.8V783H170.4ZM174.5 779.5H176.9V783H174.5ZM178.6 783H181V788.7H178.6ZM182.7 783H185.1V793.3H182.7ZM186.7 783H189.1V800.3H186.7ZM190.8 783H193.2V803.8H190.8ZM194.9 783H197.3V804.6H194.9ZM199 783H201.4V804.6H199ZM203.1 783H205.5V802.6H203.1ZM207.1 783H209.5V801.5H207.1ZM211.2 783H213.6V800.3H211.2ZM215.3 783H217.7V800.6H215.3ZM219.4 783H221.8V800.6H219.4ZM223.5 783H225.9V799.5H223.5ZM227.5 783H229.9V798.4H227.5ZM231.6 783H234V798.4H231.6ZM235.7 783H238.1V797.6H235.7ZM239.8 783H242.2V792.6H239.8ZM243.8 783H246.2V791H243.8ZM247.9 783H250.3V788.4H247.9ZM252 783H254.4V787.2H252ZM255.8 783H258.8M260.2 779.5H262.6V783H260.2ZM264.2 781.3H266.6V783H264.2ZM268.3 783H270.7V784H268.3ZM272.4 783H274.8V787.5H272.4ZM276.5 783H278.9V786.4H276.5ZM280.6 783H283V786.4H280.6ZM284.3 783H287.3M288.4 783H291.4M292.8 780.5H295.2V783H292.8ZM296.9 776.4H299.3V783H296.9ZM301 774.5H303.4V783H301ZM305 772.5H307.4V783H305ZM309.1 771.4H311.5V783H309.1ZM313.2 770.5H315.6V783H313.2ZM317.3 770.5H319.7V783H317.3ZM321.4 768.2H323.8V783H321.4ZM325.4 764.5H327.8V783H325.4ZM329.5 764.5H331.9V783H329.5ZM333.6 765.6H336V783H333.6ZM337.7 771.4H340.1V783H337.7ZM341.7 775.6H344.1V783H341.7ZM345.8 778.4H348.2V783H345.8ZM349.9 779.5H352.3V783H349.9ZM354 778.4H356.4V783H354ZM358.1 780.5H360.5V783H358.1ZM362.1 781.5H364.5V783H362.1ZM366.2 781.5H368.6V783H366.2ZM370.3 783H372.7V784.5H370.3ZM374.4 783H376.8V789.5H374.4ZM378.5 783H380.9V791.5H378.5ZM382.5 783H384.9V792.6H382.5ZM386.6 783H389V793.3H386.6ZM390.7 783H393.1V796.4H390.7ZM394.8 783H397.2V797.6H394.8ZM398.9 783H401.3V798H398.9ZM402.9 783H405.3V798.4H402.9Z" fill="#202020" stroke="#a8a8a8" stroke-width=".9"/><polyline points="40.3,742.2 44.5,747.1 48.3,754 52.6,763.3 56.8,769.5 60.6,773.3 64.5,774.5 68.3,777.9 72.5,784.9 76.5,790.2 80.7,793.3 85,790.2 89.1,781.8 93.8,772.5 97.6,767.6 102.2,767.5 106.9,768.7 111.5,769.8 117.6,771.3 122.3,774.5 126.9,775.6 131.5,775.3 136.1,774.1 142.3,771.8 146.4,772.8 150.8,769.5 155.4,767.1 159.2,765.6 162.6,763.6 166.6,758.7 170.8,755.3 175.4,760.2 179.3,770.2 183.6,783.3 187.7,794.1 192,801.8 196.2,806.4 200.2,810.7 204.4,813.4 208.4,816.4 212.5,819.5 216.5,824.1 220.7,828.8 224.7,831.1 228.9,834.1 232.9,839.1 236.3,841.4 240.5,839.5 244.3,841.4 248.6,838.5 252.8,838 256.6,832.6 261,829.2 265.1,830.3 269,833.4 273.6,838 277.6,839.5 281.3,840.6 285.8,837.7 289.9,836.5 293.9,831.1 298.1,825.7 302.1,820.3 306.2,816.4 310.3,814.1 314.4,808.7 318.4,804.9 322.6,800.3 326.6,791.8 330.7,786.1 334.7,783.6 338.9,785.6 342.9,788.4 347.1,789.5 351.1,790.2 355.2,788.7 359.2,788.7 363.4,789.5 367.4,789.5 371.4,792.6 375.6,799.5 379.6,804.9 383.7,808.7 387.7,811.8 391.9,818 395.9,823.4 400.1,826.4 404.5,831.8" fill="none" stroke="#e80c0c" stroke-width="1.3" stroke-linejoin="round"/><polyline points="40.3,730.2 44.5,734 48.3,738.6 52.6,744.8 56.8,750.2 60.6,754.4 64.5,757.9 68.3,761.8 72.5,767.1 76.5,771.8 80.7,775.6 85,778.4 89.1,779.5 93.8,777.9 97.6,775.6 102.2,774.1 106.9,772.8 111.5,772.2 117.6,772.2 122.3,773 126.9,773.3 136.1,773.3 142.3,773.3 146.4,773.3 150.8,772.2 155.4,771 159.2,770.2 162.6,769.1 166.6,766.4 170.8,764.1 175.4,763.3 179.3,765.1 183.6,767.9 187.7,773.3 192,779.5 196.2,785.6 200.2,791 204.4,796.4 208.4,801 212.5,805.7 216.5,809.8 220.7,814.1 224.7,818.4 228.9,821.8 232,823.1 236.3,826.4 240.5,829.5 244.3,831.8 248.6,833.8 252.8,834.5 256.6,834.1 261,832.9 265.1,832.3 269,832.6 273.6,833.7 277.6,834.6 281.3,835.7 285.8,836.5 289.9,836.5 293.9,835.4 298.1,833.4 302.1,830.8 306.2,827.7 310.3,824.9 314.4,821.8 318.4,818.4 322.6,814.1 326.6,809.2 330.7,804.6 334.7,800.7 338.9,797.9 342.9,795.6 347.1,794.1 351.1,794.1 355.2,792.9 359.2,792.6 363.4,791.8 367.4,791.5 371.4,791.8 375.6,793.8 379.6,795.6 383.7,797.9 387.7,801.5 391.9,804.9 395.9,808.3 400.1,811.8 404.5,815.7" fill="none" stroke="#10c0c8" stroke-width="1.3" stroke-linejoin="round"/></svg><div style="left:449px;top:121.5px;width:64px;height:412px;overflow:hidden"><div class="t n ax" style="top:5.7px">1.41000</div><div class="t n ax" style="top:54px">1.40000</div><div class="t n ax" style="top:102.3px">1.39000</div><div class="t n ax" style="top:150.6px">1.38000</div><div class="t n ax" style="top:198.9px">1.37000</div><div class="t n ax" style="top:247.2px">1.36000</div><div class="t n ax" style="top:295.5px">1.35000</div><div class="t n ax" style="top:343.8px">1.34000</div><div class="t n ax" style="top:392.1px">1.33000</div></div><div class="t n r" style="left:40px;top:545.5px;line-height:14px">RSI:<span class="g" style="width:6px"></span><span style="color:#9a18e0"><span class="j">短期</span>[9]52.5717</span><span class="g"></span><span style="color:#f06a10"><span class="j">長期</span>[42]54.9335</span></div><div class="t n" style="left:449.5px;width:64px;text-align:center;top:591.8px;line-height:14px">70</div><div class="t n" style="left:449.5px;width:64px;text-align:center;top:618.6px;line-height:14px">50</div><div class="t n" style="left:449.5px;width:64px;text-align:center;top:645.4px;line-height:14px">30</div><div class="t n r" style="left:40px;top:704.5px;line-height:14px">MACD:<span class="g" style="width:6px"></span><span style="color:#e81010">MACD[12-26]0.3868</span><span class="g"></span><span style="color:#12b4c4"><span class="k">シグナル</span>[9]0.4968</span><span class="g"></span><span style="color:#a0a0a0"><span class="j">乖離</span>-0.1100</span></div><div class="t n" style="left:449.5px;width:64px;text-align:center;top:721.9px;line-height:14px">0.5000</div><div class="t n" style="left:449.5px;width:64px;text-align:center;top:775.4px;line-height:14px">0.0000</div><div class="t n" style="left:449.5px;width:64px;text-align:center;top:828.9px;line-height:14px">-0.5000</div><div style="left:36.5px;top:854.5px;width:476px;height:1px;background:#b4b4b4"></div><div class="t n" style="left:39px;top:856px;line-height:15px"><span class="j">始値</span>:</div><div class="t n" style="left:115px;top:856px;line-height:15px"><span class="j">高値</span>:</div><div class="t n" style="left:191px;top:856px;line-height:15px"><span class="j">安値</span>:</div><div class="t n" style="left:231.5px;width:100px;text-align:right;top:856px;line-height:15px"><span class="j">終値</span>:1.34298</div><div class="sb" style="left:336.5px;top:855.5px;width:16.5px;height:16px;"><i class="lf"></i></div><div class="trk" style="left:352.5px;top:855.5px;width:58px;height:16px;"></div><div class="thumb" style="left:386.4px;top:855.5px;width:14.5px;height:16px;"></div><div class="sb" style="left:410.5px;top:855.5px;width:16.5px;height:16px;"><i class="rt"></i></div><div style="left:427px;top:855.5px;width:22px;height:16px;background:#fff"><div class="t n" style="left:3.5px;top:1px;line-height:14px">100</div></div><div class="sb" style="left:449px;top:855.5px;width:16.5px;height:16px;"><i class="dn2"></i></div><div class="sb" style="left:480.5px;top:855.5px;width:16px;height:16px;"><i class="ph"></i><i class="pv"></i></div><div class="sb" style="left:497px;top:855.5px;width:16.5px;height:16px;"><i class="ph"></i></div></div><div class="win" style="left:1094px;top:-4px;width:514.5px;height:884px"><div class="tb" style="left:0px;top:3px;width:514.5px;height:26px;"></div><div class="body" style="left:0px;top:29px;width:511px;height:852px;"></div><svg class="a" style="left:4px;top:9px" width="16" height="16" viewBox="0 0 16 16"><rect width="16" height="16" fill="#11295c"/><path d="M3.2 14V7.2L8 2.6L12.8 7.2V14H10.3V8.3L8 6.1L5.7 8.3V14Z" fill="#fff"/></svg><div class="t ttl" style="left:23.5px;top:9px;"><span class="k">チャート</span> : NZD/JPY 60<span class="j">分足</span></div><div class="wb" style="left:349px;top:9px;width:47px;height:15.5px;"><span class="mn">MENU</span><i class="dn"></i></div><div class="wb" style="left:398.5px;top:9px;width:25px;height:15.5px;"><svg width="25" height="15" viewBox="0 0 25 15"><path d="M8.5 11.5L14.5 5.5" stroke="#858585" stroke-width="2"/><path d="M11.2 4H16V8.8Z" fill="#858585"/></svg></div><div class="wb" style="left:426px;top:9px;width:25.5px;height:15.5px;"><svg width="25" height="15" viewBox="0 0 25 15"><rect x="8.5" y="9.5" width="8" height="2" fill="#858585"/></svg></div><div class="wb" style="left:454px;top:9px;width:25.5px;height:15.5px;"><svg width="25" height="15" viewBox="0 0 25 15"><rect x="8.5" y="3.5" width="8" height="7" fill="none" stroke="#858585" stroke-width="1.2"/><rect x="8" y="3" width="9" height="2" fill="#858585"/></svg></div><div class="wb" style="left:482.5px;top:9px;width:25px;height:15.5px;"><svg width="25" height="15" viewBox="0 0 25 15"><path d="M9 3.5L16 10.5M16 3.5L9 10.5" stroke="#858585" stroke-width="2.1"/></svg></div><div class="sel" style="left:35px;top:36px;width:73.5px;height:20px;"><div class="t st" style="left:4px;top:0;line-height:18px">NZD/JPY</div><div class="arr" style="width:16.5px"><i></i></div></div><div class="sel" style="left:115px;top:36px;width:63.5px;height:20px;"><div class="t st" style="left:4px;top:0;line-height:18px">60<span class="j">分足</span></div><div class="arr" style="width:16.5px"><i></i></div></div><div class="sel" style="left:184px;top:36px;width:87.5px;height:20px;"><div class="t st" style="left:3px;top:0;line-height:18px"><span class="k">ローソク</span>(BID)</div><div class="arr" style="width:16.5px"><i></i></div></div><div class="sel dis" style="left:289px;top:36px;width:81.5px;height:20px;"><div class="t st" style="left:27px;top:0;line-height:18px">/ /</div><div class="arr" style="width:16.5px"><i></i></div></div><div class="btn" style="left:377px;top:36px;width:41.5px;height:20.5px;"><div class="t" style="left:0;width:100%;text-align:center;top:0;line-height:18px;color:#8a8a8a;font-size:12px"><span class="j">検索</span></div></div><div class="tool on" style="left:7px;top:64px;width:21.5px;height:21.5px;"><svg width="21" height="21" viewBox="0 0 21 21" style="position:absolute;left:-.5px;top:-.5px"><path d="M4 6.5H17.5M7.5 2.5V17.5" stroke="#444" stroke-width="1" fill="none"/><path d="M9.5 8V16L11.6 14.2L13 17.3L14.3 16.7L13 13.7H15.6Z" fill="#333"/></svg></div><div class="tool" style="left:7px;top:89px;width:21.5px;height:21.5px;"><svg width="21" height="21" viewBox="0 0 21 21" style="position:absolute;left:-.5px;top:-.5px"><path d="M4.6 15.4L5.6 12.6L14.6 3.6C15.1 3.1 15.8 3.1 16.3 3.6L16.9 4.2C17.4 4.7 17.4 5.4 16.9 5.9L7.9 14.9Z" fill="#505050"/><path d="M4.3 15.8L6.4 15.2L5 13.8Z" fill="#222"/><path d="M4.5 17.5H17" stroke="#666" stroke-width="1"/></svg></div><div class="tool" style="left:7px;top:114px;width:21.5px;height:21.5px;"><svg width="21" height="21" viewBox="0 0 21 21" style="position:absolute;left:-.5px;top:-.5px"><path d="M3.5 3V17.5H17.5" stroke="#444" fill="none"/><path d="M3 3.5H5M3 6.5H5M3 9.5H5M3 12.5H5M3 15.5H5" stroke="#444"/><path d="M5.5 10L8.5 4.5L11 9.5L13.5 4.5L16.5 10" stroke="#444" fill="none" stroke-width="1.1"/><path d="M5.5 13C7.5 11 9 11.5 11 13S14.5 14 16.5 12.5" stroke="#444" fill="none" stroke-width="1.1"/></svg></div><div class="tool" style="left:7px;top:139px;width:21.5px;height:21.5px;"><svg width="21" height="21" viewBox="0 0 21 21" style="position:absolute;left:-.5px;top:-.5px"><path d="M4.5 2.5V18M4.5 2.5H7M4.5 7.5H6.5M4.5 12.5H6.5M4.5 17.5H7" stroke="#444" fill="none"/><text x="6.6" y="10" font-size="7" font-family="Liberation Sans,sans-serif" fill="#333" textLength="12" lengthAdjust="spacingAndGlyphs">70.0</text><text x="6.6" y="17" font-size="7" font-family="Liberation Sans,sans-serif" fill="#333" textLength="12" lengthAdjust="spacingAndGlyphs">60.0</text></svg></div><div class="tool" style="left:7px;top:164px;width:21.5px;height:21.5px;"><svg width="21" height="21" viewBox="0 0 21 21" style="position:absolute;left:-.5px;top:-.5px"><circle cx="7" cy="6.8" r="3" fill="#666"/><path d="M5.3 6.8H8.7M7 5.1V8.5" stroke="#bbb" stroke-width=".8"/><path d="M14.3 3L15.3 5.6H18L15.8 7.3L16.6 10L14.3 8.4L12 10L12.8 7.3L10.6 5.6H13.3Z" fill="#444"/><path d="M7 17.5C3 14.5 3.5 11.5 5.3 11.5C6.3 11.5 7 12.4 7 12.4S7.7 11.5 8.7 11.5C10.5 11.5 11 14.5 7 17.5Z" fill="#444"/><circle cx="14.6" cy="14.5" r="3" fill="#666"/><path d="M12.9 14.5H16.3" stroke="#bbb" stroke-width=".9"/></svg></div><div class="tool" style="left:7px;top:189px;width:21.5px;height:21.5px;"><svg width="21" height="21" viewBox="0 0 21 21" style="position:absolute;left:-.5px;top:-.5px"><path d="M2.5 10.5C5 6.2 8 5 10.5 5S16 6.2 18.5 10.5C16 14.8 13 16 10.5 16S5 14.8 2.5 10.5Z" fill="#fff" stroke="#444" stroke-width="1.3"/><circle cx="10.5" cy="10" r="4" fill="#333"/><circle cx="9.3" cy="8.6" r="1.2" fill="#999"/></svg></div><div class="tool" style="left:7px;top:214px;width:21.5px;height:21.5px;"><svg width="21" height="21" viewBox="0 0 21 21" style="position:absolute;left:-.5px;top:-.5px"><rect x="6.5" y="3" width="8" height="5" fill="#e8e8e8" stroke="#666" stroke-width=".8"/><rect x="3" y="7.5" width="15" height="7" rx="1.5" fill="#5a5a5a"/><rect x="6" y="12" width="9" height="6" fill="#e4e4e4" stroke="#666" stroke-width=".8"/><rect x="14" y="9.3" width="2.5" height="1.2" fill="#ddd"/></svg></div><div class="tool" style="left:7px;top:239px;width:21.5px;height:21.5px;"><svg width="21" height="21" viewBox="0 0 21 21" style="position:absolute;left:-.5px;top:-.5px"><path d="M3.5 3.5H14.5V9H10V14.5H3.5Z" fill="#fff" stroke="#444"/><path d="M3.5 7H14.5M3.5 10.7H10M7.2 3.5V14.5M10.8 3.5V9" stroke="#444" fill="none"/><path d="M3.5 3.5H14.5" stroke="#444" stroke-width="2"/><path d="M10.5 10.5H16L17.5 12V18.5H10.5Z" fill="#444"/><rect x="12" y="14.5" width="4" height="3" fill="#eee"/><rect x="12.3" y="10.8" width="3" height="2.2" fill="#eee"/><path d="M4.5 15V17.5H8.5M7 16L8.8 17.5L7 19" stroke="#444" fill="none" stroke-width="1.1"/></svg></div><div class="pan" style="left:35.5px;top:63px;width:469px;height:474.5px;"></div><div style="left:35.5px;top:541px;width:469px;height:1px;background:#c2c2c2"></div><div class="pan" style="left:35.5px;top:546px;width:469px;height:150px;"></div><div style="left:35.5px;top:700px;width:469px;height:1px;background:#c2c2c2"></div><div class="pan" style="left:35.5px;top:704.5px;width:469px;height:167.5px;"></div><div style="left:36.5px;top:78px;width:467px;height:1px;background:#b4b4b4"></div><div style="left:36.5px;top:107px;width:467px;height:1px;background:#b4b4b4"></div><div class="t n r" style="left:39.5px;top:63.5px;line-height:14px"><span class="dd">2014/07/22 12:00</span><span class="g" style="width:8px"></span><span class="j">始値</span>:88.101<span class="g" style="width:8px"></span><span class="j">高値</span>:88.170<span class="g" style="width:8px"></span><span class="j">安値</span>:88.039<span class="g" style="width:8px"></span><span class="j">終値</span>:88.081</div><div style="left:37px;top:79px;width:466.5px;height:28px;overflow:hidden"><div class="t n r" style="left:3px;top:0px;line-height:14px"><span class="j">単純移動平均</span>:<span class="g" style="width:6px"></span><span style="color:#9a18e0"><span class="j">短期</span>[5]88.074</span><span class="g"></span><span style="color:#f06a10"><span class="j">長期</span>[21]88.079</span></div><div class="t n r" style="left:3px;top:13.5px;line-height:14px"><span class="k">ボリンジャーバンド</span>:<span class="g" style="width:6px"></span><span style="color:#0a28f0"><span class="j">基準線</span>[21]88.080</span><span class="g"></span><span style="color:#1478f0"><span class="j">偏差</span>A<span class="j">上</span>[2.00]88.138</span><span class="g"></span><span style="color:#1478f0"><span class="j">偏差</span>A<span class="j">下</span>[2.00]88.021</span><span class="g"></span><span style="color:#5aa8f5"><span class="j">偏差</span>B<span class="j">上</span>[3.00]88.167</span></div></div><div class="t d" style="left:181px;top:108px;line-height:13px">07/24</div><div class="t d" style="left:276.7px;top:108px;line-height:13px">07/25</div><div class="t d" style="left:373.8px;top:108px;line-height:13px">07/26</div><div style="left:36.5px;top:107.5px;width:93px;height:13.5px;background:#2f4674;overflow:hidden"><div class="t d" style="left:0.5px;top:0.5px;line-height:13px;color:#fff">2014/07/22 12:00</div></div><svg class="a" style="left:0;top:0" width="511" height="884" viewBox="0 0 511 884" font-family='Liberation Sans,IPAGothic,sans-serif'><rect x="39" y="121" width="400" height="412.5" fill="#000"/><path d="M42.5 122V532.5M46.5 122V532.5M50.5 122V532.5M54.5 122V532.5M58.5 122V532.5M62.5 122V532.5M66.5 122V532.5M70.5 122V532.5M74.5 122V532.5M78.5 122V532.5M82.5 122V532.5M90.5 122V532.5M94.5 122V532.5M98.5 122V532.5M102.5 122V532.5M106.5 122V532.5M110.5 122V532.5M114.5 122V532.5M118.5 122V532.5M122.5 122V532.5M126.5 122V532.5M130.5 122V532.5M138.5 122V532.5M142.5 122V532.5M146.5 122V532.5M150.5 122V532.5M154.5 122V532.5M158.5 122V532.5M162.5 122V532.5M166.5 122V532.5M170.5 122V532.5M174.5 122V532.5M178.5 122V532.5M186.5 122V532.5M190.5 122V532.5M194.5 122V532.5M198.5 122V532.5M202.5 122V532.5M206.5 122V532.5M210.5 122V532.5M214.5 122V532.5M218.5 122V532.5M222.5 122V532.5M226.5 122V532.5M234.5 122V532.5M238.5 122V532.5M242.5 122V532.5M246.5 122V532.5M250.5 122V532.5M254.5 122V532.5M258.5 122V532.5M262.5 122V532.5M266.5 122V532.5M270.5 122V532.5M274.5 122V532.5M282.5 122V532.5M286.5 122V532.5M290.5 122V532.5M294.5 122V532.5M298.5 122V532.5M302.5 122V532.5M306.5 122V532.5M310.5 122V532.5M314.5 122V532.5M318.5 122V532.5M322.5 122V532.5M330.5 122V532.5M334.5 122V532.5M338.5 122V532.5M342.5 122V532.5M346.5 122V532.5M350.5 122V532.5M354.5 122V532.5M358.5 122V532.5M362.5 122V532.5M366.5 122V532.5M370.5 122V532.5M378.5 122V532.5M382.5 122V532.5M386.5 122V532.5M390.5 122V532.5M394.5 122V532.5M398.5 122V532.5M402.5 122V532.5M406.5 122V532.5M410.5 122V532.5M414.5 122V532.5M418.5 122V532.5M426.5 122V532.5M430.5 122V532.5M434.5 122V532.5M438.5 122V532.5M40 122.5H438M40 128.5H438M40 134.5H438M40 140.5H438M40 146.5H438M40 152.5H438M40 158.5H438M40 170.5H438M40 176.5H438M40 182.5H438M40 188.5H438M40 194.5H438M40 200.5H438M40 206.5H438M40 212.5H438M40 218.5H438M40 230.5H438M40 236.5H438M40 242.5H438M40 248.5H438M40 254.5H438M40 260.5H438M40 266.5H438M40 272.5H438M40 278.5H438M40 290.5H438M40 296.5H438M40 302.5H438M40 308.5H438M40 314.5H438M40 320.5H438M40 326.5H438M40 332.5H438M40 338.5H438M40 350.5H438M40 356.5H438M40 362.5H438M40 368.5H438M40 374.5H438M40 380.5H438M40 386.5H438M40 392.5H438M40 398.5H438M40 410.5H438M40 416.5H438M40 422.5H438M40 428.5H438M40 434.5H438M40 440.5H438M40 446.5H438M40 452.5H438M40 458.5H438M40 470.5H438M40 476.5H438M40 482.5H438M40 488.5H438M40 494.5H438M40 500.5H438M40 506.5H438M40 512.5H438M40 518.5H438M40 530.5H438" stroke="#242424" stroke-width="1" fill="none" shape-rendering="crispEdges"/><path d="M40 164.5H438M40 224.5H438M40 284.5H438M40 344.5H438M40 404.5H438M40 464.5H438M40 524.5H438M134.5 122V532.5M230.5 122V532.5M326.5 122V532.5M422.5 122V532.5" stroke="#3a3a3a" stroke-width="1" fill="none" shape-rendering="crispEdges"/><path d="M86.5 122V532.5M182.5 122V532.5M278.5 122V532.5M374.5 122V532.5" stroke="#6e6e6e" stroke-width="1" fill="none" shape-rendering="crispEdges"/><clipPath id="c3"><rect x="39" y="121" width="400" height="412.5"/></clipPath><g clip-path="url(#c3)"><path d="M41.1 264.5V278.4" stroke="#4446d8" stroke-width="1"/><rect x="39.6" y="266.8" width="3.0" height="6.9" fill="#4446d8"/><path d="M45.1 269.2V283" stroke="#4446d8" stroke-width="1"/><rect x="43.6" y="271.5" width="3.0" height="9.2" fill="#4446d8"/><path d="M49.1 266.8V281.9" stroke="#e8201c" stroke-width="1"/><rect x="47.6" y="268.7" width="3.0" height="12" fill="#e8201c"/><path d="M53.1 264.1V272.6" stroke="#e8201c" stroke-width="1"/><rect x="51.6" y="268" width="3.0" height="2.3" fill="#e8201c"/><path d="M57.1 266.8V294.6" stroke="#4446d8" stroke-width="1"/><rect x="55.6" y="268" width="3.0" height="24.3" fill="#4446d8"/><path d="M61.1 281.9V293.4" stroke="#e8201c" stroke-width="1"/><rect x="59.6" y="284.2" width="3.0" height="8.1" fill="#e8201c"/><path d="M65.1 277.2V286.5" stroke="#e8201c" stroke-width="1"/><rect x="63.6" y="279.5" width="3.0" height="5.8" fill="#e8201c"/><path d="M69.1 276.1V284.2" stroke="#4446d8" stroke-width="1"/><rect x="67.6" y="278.4" width="3.0" height="3.5" fill="#4446d8"/><path d="M73.1 280.7V289.9" stroke="#4446d8" stroke-width="1"/><rect x="71.6" y="281.9" width="3.0" height="2.3" fill="#4446d8"/><path d="M77.1 264.1V302.6" stroke="#e8201c" stroke-width="1"/><rect x="75.6" y="266.8" width="3.0" height="17.3" fill="#e8201c"/><path d="M81.1 265.7V296.9" stroke="#4446d8" stroke-width="1"/><rect x="79.6" y="266.8" width="3.0" height="28.9" fill="#4446d8"/><path d="M85.1 285.3V296.9" stroke="#e8201c" stroke-width="1"/><rect x="83.6" y="294.6" width="3.0" height="1.8" fill="#e8201c"/><path d="M89.1 293.4V301.5" stroke="#4446d8" stroke-width="1"/><rect x="87.6" y="295" width="3.0" height="4.2" fill="#4446d8"/><path d="M93.1 295.7V305.6" stroke="#4446d8" stroke-width="1"/><rect x="91.6" y="298" width="3.0" height="5.8" fill="#4446d8"/><path d="M97.1 287.2V305" stroke="#e8201c" stroke-width="1"/><rect x="95.6" y="295.7" width="3.0" height="8.8" fill="#e8201c"/><path d="M101.1 291.8V301.5" stroke="#4446d8" stroke-width="1"/><rect x="99.6" y="295" width="3.0" height="3" fill="#4446d8"/><path d="M105.1 291.8V301.5" stroke="#e8201c" stroke-width="1"/><rect x="103.6" y="293.4" width="3.0" height="2.3" fill="#e8201c"/><path d="M109.1 291.1V296.9" stroke="#e8201c" stroke-width="1"/><rect x="107.6" y="292.3" width="3.0" height="1.8" fill="#e8201c"/><path d="M113.1 286.5V296.9" stroke="#e8201c" stroke-width="1"/><rect x="111.6" y="288.8" width="3.0" height="7.6" fill="#e8201c"/><path d="M117.1 284.9V292.3" stroke="#e8201c" stroke-width="1"/><rect x="115.6" y="287.2" width="3.0" height="2.8" fill="#e8201c"/><path d="M121.1 280.7V289.9" stroke="#e8201c" stroke-width="1"/><rect x="119.6" y="285.8" width="3.0" height="3" fill="#e8201c"/><path d="M125.1 287.2V298" stroke="#4446d8" stroke-width="1"/><rect x="123.6" y="288.3" width="3.0" height="2.8" fill="#4446d8"/><path d="M129.1 280.2V294.6" stroke="#e8201c" stroke-width="1"/><rect x="127.6" y="286.5" width="3.0" height="4.6" fill="#e8201c"/><path d="M133.1 277.2V292.3" stroke="#e8201c" stroke-width="1"/><rect x="131.6" y="278.4" width="3.0" height="8.8" fill="#e8201c"/><path d="M137.1 277.9V294.6" stroke="#4446d8" stroke-width="1"/><rect x="135.6" y="278.4" width="3.0" height="8.1" fill="#4446d8"/><path d="M141.1 278.4V288.8" stroke="#e8201c" stroke-width="1"/><rect x="139.6" y="279.5" width="3.0" height="6.9" fill="#e8201c"/><path d="M145.1 277.9V285.8" stroke="#4446d8" stroke-width="1"/><rect x="143.6" y="279.1" width="3.0" height="5.1" fill="#4446d8"/><path d="M149.1 272.6V286.5" stroke="#e8201c" stroke-width="1"/><rect x="147.6" y="273.8" width="3.0" height="10.4" fill="#e8201c"/><path d="M153.1 272.6V284.2" stroke="#4446d8" stroke-width="1"/><rect x="151.6" y="274.9" width="3.0" height="3.5" fill="#4446d8"/><path d="M157.1 273.3V280.7" stroke="#4446d8" stroke-width="1"/><rect x="155.6" y="275.6" width="3.0" height="2.3" fill="#4446d8"/><path d="M161.1 274.2V286.5" stroke="#4446d8" stroke-width="1"/><rect x="159.6" y="277.2" width="3.0" height="2.3" fill="#4446d8"/><path d="M165.1 271V284.2" stroke="#e8201c" stroke-width="1"/><rect x="163.6" y="272.2" width="3.0" height="10.4" fill="#e8201c"/><path d="M169.1 270.3V280.7" stroke="#4446d8" stroke-width="1"/><rect x="167.6" y="272.6" width="3.0" height="5.8" fill="#4446d8"/><path d="M173.1 275.6V283" stroke="#4446d8" stroke-width="1"/><rect x="171.6" y="277.2" width="3.0" height="2.3" fill="#4446d8"/><path d="M177.1 276.1V284.2" stroke="#e8201c" stroke-width="1"/><rect x="175.6" y="278.4" width="3.0" height="1.8" fill="#e8201c"/><path d="M181.1 275.6V285.3" stroke="#e8201c" stroke-width="1"/><rect x="179.6" y="276.8" width="3.0" height="2.8" fill="#e8201c"/><path d="M185.1 262.7V278.4" stroke="#e8201c" stroke-width="1"/><rect x="183.6" y="264.1" width="3.0" height="13.2" fill="#e8201c"/><path d="M189.1 262.7V271.5" stroke="#4446d8" stroke-width="1"/><rect x="187.6" y="264.1" width="3.0" height="2.8" fill="#4446d8"/><path d="M193.1 264.5V271.5" stroke="#e8201c" stroke-width="1"/><rect x="191.6" y="266.8" width="3.0" height="2.3" fill="#e8201c"/><path d="M197.1 257.6V269.2" stroke="#e8201c" stroke-width="1"/><rect x="195.6" y="258.3" width="3.0" height="8.5" fill="#e8201c"/><path d="M201.1 255.8V263.4" stroke="#4446d8" stroke-width="1"/><rect x="199.6" y="257.6" width="3.0" height="2.8" fill="#4446d8"/><path d="M205.1 239.1V263.4" stroke="#e8201c" stroke-width="1"/><rect x="203.6" y="248.4" width="3.0" height="12.7" fill="#e8201c"/><path d="M209.1 330.6V356" stroke="#e8201c" stroke-width="1"/><rect x="207.6" y="341" width="3.0" height="13.9" fill="#e8201c"/><path d="M213.1 337.6V363" stroke="#4446d8" stroke-width="1"/><rect x="211.6" y="339.9" width="3.0" height="21.9" fill="#4446d8"/><path d="M217.1 350.3V367.6" stroke="#e8201c" stroke-width="1"/><rect x="215.6" y="354.9" width="3.0" height="6.9" fill="#e8201c"/><path d="M221.1 349.1V359.5" stroke="#e8201c" stroke-width="1"/><rect x="219.6" y="350.3" width="3.0" height="3.5" fill="#e8201c"/><path d="M225.1 335.2V357.2" stroke="#e8201c" stroke-width="1"/><rect x="223.6" y="343.3" width="3.0" height="6.9" fill="#e8201c"/><path d="M229.1 343.3V365.3" stroke="#4446d8" stroke-width="1"/><rect x="227.6" y="343.3" width="3.0" height="20.8" fill="#4446d8"/><path d="M233.1 361.8V373.4" stroke="#4446d8" stroke-width="1"/><rect x="231.6" y="363" width="3.0" height="5.8" fill="#4446d8"/><path d="M237.1 367.6V393" stroke="#4446d8" stroke-width="1"/><rect x="235.6" y="368.7" width="3.0" height="23.1" fill="#4446d8"/><path d="M241.1 387.2V402.2" stroke="#4446d8" stroke-width="1"/><rect x="239.6" y="393" width="3.0" height="8.1" fill="#4446d8"/><path d="M245 398.8V410.3" stroke="#4446d8" stroke-width="1"/><rect x="243.5" y="400.6" width="3.0" height="2.8" fill="#4446d8"/><path d="M249 390.7V414.9" stroke="#e8201c" stroke-width="1"/><rect x="247.5" y="391.8" width="3.0" height="11.6" fill="#e8201c"/><path d="M253 382.1V395.3" stroke="#e8201c" stroke-width="1"/><rect x="251.5" y="383.8" width="3.0" height="10.4" fill="#e8201c"/><path d="M257 372.2V386.1" stroke="#e8201c" stroke-width="1"/><rect x="255.5" y="373.4" width="3.0" height="11.6" fill="#e8201c"/><path d="M261 365.3V382.6" stroke="#e8201c" stroke-width="1"/><rect x="259.5" y="367.1" width="3.0" height="6.2" fill="#e8201c"/><path d="M265 365.3V374.5" stroke="#4446d8" stroke-width="1"/><rect x="263.5" y="367.6" width="3.0" height="2.3" fill="#4446d8"/><path d="M269 356V371.1" stroke="#e8201c" stroke-width="1"/><rect x="267.5" y="360.2" width="3.0" height="9.7" fill="#e8201c"/><path d="M273 353.7V376.8" stroke="#4446d8" stroke-width="1"/><rect x="271.5" y="359.5" width="3.0" height="17.3" fill="#4446d8"/><path d="M277 352.6V379.1" stroke="#e8201c" stroke-width="1"/><rect x="275.5" y="357.2" width="3.0" height="18.5" fill="#e8201c"/><path d="M281 352.1V360.7" stroke="#e8201c" stroke-width="1"/><rect x="279.5" y="354.4" width="3.0" height="2.8" fill="#e8201c"/><path d="M285 353V357.7" stroke="#e8201c" stroke-width="1"/><rect x="283.5" y="354.4" width="3.0" height="1.6" fill="#e8201c"/><path d="M289 352.6V363" stroke="#4446d8" stroke-width="1"/><rect x="287.5" y="354.4" width="3.0" height="2.3" fill="#4446d8"/><path d="M293 354.9V371.1" stroke="#4446d8" stroke-width="1"/><rect x="291.5" y="356.7" width="3.0" height="11.6" fill="#4446d8"/><path d="M297 366.4V372.2" stroke="#4446d8" stroke-width="1"/><rect x="295.5" y="367.6" width="3.0" height="2.3" fill="#4446d8"/><path d="M301 366.4V375.7" stroke="#4446d8" stroke-width="1"/><rect x="299.5" y="369.9" width="3.0" height="3.5" fill="#4446d8"/><path d="M305 372.2V387.2" stroke="#4446d8" stroke-width="1"/><rect x="303.5" y="374.5" width="3.0" height="6.9" fill="#4446d8"/><path d="M309 372.2V382.6" stroke="#e8201c" stroke-width="1"/><rect x="307.5" y="373.4" width="3.0" height="8.1" fill="#e8201c"/><path d="M313 361.8V374.5" stroke="#e8201c" stroke-width="1"/><rect x="311.5" y="366.4" width="3.0" height="6.5" fill="#e8201c"/><path d="M317 360.7V367.6" stroke="#e8201c" stroke-width="1"/><rect x="315.5" y="361.8" width="3.0" height="4.6" fill="#e8201c"/><path d="M321 361.3V375.7" stroke="#4446d8" stroke-width="1"/><rect x="319.5" y="361.8" width="3.0" height="6.9" fill="#4446d8"/><path d="M325 367.6V379.1" stroke="#4446d8" stroke-width="1"/><rect x="323.5" y="368.7" width="3.0" height="4.6" fill="#4446d8"/><path d="M329 369.9V379.1" stroke="#4446d8" stroke-width="1"/><rect x="327.5" y="373.4" width="3.0" height="3.5" fill="#4446d8"/><path d="M333 369.9V378" stroke="#e8201c" stroke-width="1"/><rect x="331.5" y="373.4" width="3.0" height="2.3" fill="#e8201c"/><path d="M337 365.3V376.8" stroke="#4446d8" stroke-width="1"/><rect x="335.5" y="372.2" width="3.0" height="3.5" fill="#4446d8"/><path d="M341 367.6V376.8" stroke="#e8201c" stroke-width="1"/><rect x="339.5" y="373.4" width="3.0" height="2.3" fill="#e8201c"/><path d="M345 372.2V386.1" stroke="#4446d8" stroke-width="1"/><rect x="343.5" y="373.4" width="3.0" height="10.4" fill="#4446d8"/><path d="M349 380.3V395.3" stroke="#4446d8" stroke-width="1"/><rect x="347.5" y="382.6" width="3.0" height="11.6" fill="#4446d8"/><path d="M353 391.8V399.9" stroke="#4446d8" stroke-width="1"/><rect x="351.5" y="393.7" width="3.0" height="2.8" fill="#4446d8"/><path d="M357 395.3V405.7" stroke="#4446d8" stroke-width="1"/><rect x="355.5" y="396.5" width="3.0" height="1.8" fill="#4446d8"/><path d="M361 388.4V398.8" stroke="#e8201c" stroke-width="1"/><rect x="359.5" y="393" width="3.0" height="5.3" fill="#e8201c"/><path d="M365 390.7V405.7" stroke="#4446d8" stroke-width="1"/><rect x="363.5" y="391.8" width="3.0" height="4.6" fill="#4446d8"/><path d="M369 393V403.4" stroke="#4446d8" stroke-width="1"/><rect x="367.5" y="395.3" width="3.0" height="2.3" fill="#4446d8"/><path d="M373 393V399.9" stroke="#e8201c" stroke-width="1"/><rect x="371.5" y="394.6" width="3.0" height="3" fill="#e8201c"/><path d="M377 391.8V410.3" stroke="#4446d8" stroke-width="1"/><rect x="375.5" y="395.3" width="3.0" height="8.1" fill="#4446d8"/><path d="M381 396.5V406.9" stroke="#e8201c" stroke-width="1"/><rect x="379.5" y="398.3" width="3.0" height="6.2" fill="#e8201c"/><path d="M385 396.5V406.9" stroke="#4446d8" stroke-width="1"/><rect x="383.5" y="398.3" width="3.0" height="7.4" fill="#4446d8"/><path d="M389 401.1V408" stroke="#e8201c" stroke-width="1"/><rect x="387.5" y="402.2" width="3.0" height="3.5" fill="#e8201c"/><path d="M393 390V403.4" stroke="#e8201c" stroke-width="1"/><rect x="391.5" y="391.8" width="3.0" height="10.4" fill="#e8201c"/><path d="M397 383.8V397.6" stroke="#4446d8" stroke-width="1"/><rect x="395.5" y="390.7" width="3.0" height="3.5" fill="#4446d8"/><polyline points="40.2,264.5 47.6,263.4 56.8,259.9 66,259.9 75.3,257.6 84.5,253 92.6,249.5 100.7,250.7 109.9,250.2 116.9,253 128.4,257.6 136.5,265 144.6,262.7 156.1,260.4 161.9,262.7 170,260.4 176.9,263.4 182.7,263.4 189.6,258.8 197.7,255.3 203.5,248.4 208.1,229.9 213.9,203.3 220.8,188.3 232.4,174.4 239.3,162.9 245.1,155.5 252,157.8 258.9,166.4 265.8,180.2 271.6,197.5 276,218.3 281.5,244 284.9,267.1 287.2,297.1 288.4,313.3 295.3,319.1 302.3,323.7 309.2,329.5 316.1,329.9 323.1,332.9 330,339.9 336.9,343.8 343.8,343.3 350.8,337.6 357.7,334.6 364.6,338.2 373.9,344.5 383.1,345.2 391.2,344.9 396.5,349.8" fill="none" stroke="#5aa2e6" stroke-width="1.1" stroke-linejoin="round"/><polyline points="40.2,284.9 47.6,287.6 56.8,293.4 66,293.4 74.1,295.7 82.2,302.6 89.1,310.7 98.4,316.5 107.6,319.5 116.9,318.8 128.4,316.5 137.6,314.2 146.9,314.9 156.1,315.4 165.4,311.9 174.6,306.1 181.5,303.1 188.5,303.1 193.1,301.5 203.5,303.8 207.6,320.2 212.2,350.3 219.1,378 226.7,401.1 233.5,426.6 240.3,455.6 247.2,479.5 254,493.2 260,499.1 264.2,500.8 269.3,495.7 275.3,488.1 280.4,472.7 284.7,452.2 288.1,421.5 291.5,419.5 298.3,419.5 305.2,419.5 308.6,416.4 317.1,416.1 322.2,412.1 329,398.5 334.2,392.5 338.4,391.2 342.7,392.5 347.8,399.4 352.9,406.2 359.8,412.1 366.6,416.1 373.4,416.8 380.2,422.4 388.8,427.5 393.9,427 396.9,426.3" fill="none" stroke="#5aa2e6" stroke-width="1.1" stroke-linejoin="round"/><polyline points="40.2,266.8 47.6,266.8 56.8,265 66,265 75.3,263.4 84.5,261.1 92.6,259.9 105.3,260.4 114.5,263.4 128.4,268 136.5,272.6 144.6,271.5 156.1,270.3 161.9,270.8 170,269.2 176.9,270.3 182.7,270.3 189.6,266.8 197.7,262.2 203.5,255.3 208.1,243.7 213.9,227.6 220.8,220.6 232.4,214.9 239.3,210.9 245.1,209.6 252,213.7 258.9,223 265.8,236.8 271.6,251.8 276,263.4 280.3,281 284.9,308.7 288.4,331.3 295.3,335.2 302.3,339.9 309.2,344.9 316.1,343.8 323.1,346.8 330,350.7 339.2,352.6 348.5,350.3 355.4,347.5 364.6,351.4 373.9,356.7 383.1,357.7 391.2,359 396.5,362.3" fill="none" stroke="#1a78dc" stroke-width="1.1" stroke-linejoin="round"/><polyline points="40.2,282.5 47.6,284.2 56.8,289.9 66,289.5 75.3,291.1 82.2,294.6 89.1,301.5 98.4,305.6 107.6,307.3 116.9,307.3 128.4,306.8 137.6,303.8 146.9,305 156.1,305.6 165.4,302.6 174.6,299.2 183.8,296.4 193.1,294.6 203.5,295 208.7,313.3 213.3,335.2 219.1,352.6 226,368.7 233,391.8 239.9,412.6 245.7,427.6 252.6,438 258.4,443.1 265.3,446.1 272.2,445 276.9,441.5 281.5,428.8 284.9,414.9 288.4,403.4 295.3,402.9 302.3,402.9 311.5,402.2 318.4,399.2 325.4,391.8 332.3,385.4 338.1,383.3 343.8,385.4 349.6,391.8 357.7,399.2 366.9,403.4 376.2,408 385.4,412.6 392.4,414.5 396.5,413.8" fill="none" stroke="#1a78dc" stroke-width="1.1" stroke-linejoin="round"/><polyline points="40.2,276.1 49.9,275.6 59.1,277.2 70.7,278.4 82.2,278.4 93.8,281.9 105.3,284.2 116.9,285.8 128.4,287.2 140,288.8 151.5,288.1 163.1,287.6 174.6,284.2 186.2,280.7 197.7,277.2 204.6,275.4 209.9,278.7 219.1,285.6 230.7,297.1 242.2,313.3 253.8,328.3 265.3,341 274.5,351 281.5,359.5 288.4,367.6 295.3,369.9 304.6,371.5 313.8,372.2 323.1,370.6 332.3,368.7 343.8,368.7 353.1,371.7 362.3,375.7 371.6,380.3 380.8,383.3 390,385.4 396.5,388.4" fill="none" stroke="#e0661c" stroke-width="1.1" stroke-linejoin="round"/><polyline points="40.2,276.1 47.6,273.3 54.5,274.2 61.4,277.2 70.7,281.9 77.6,283 83.4,285.3 89.1,292.3 94.9,296.9 100.7,298 107.6,296.4 114.5,291.1 123.8,288.8 133,285.8 142.3,284.2 151.5,279.5 160.7,277.2 167.7,276.8 174.6,279.1 181.5,277.9 188.5,273.8 197.7,265.7 204.6,259.9 209.9,283.3 216.8,317.9 223.7,343.3 230.7,354.9 237.6,366.4 242.2,380.3 248,390.7 252.6,394.2 258.4,384.9 265.3,375.7 272.2,369.9 279.2,364.1 286.1,359.5 291.9,357.2 297.6,364.1 304.6,370.6 311.5,372.9 318.4,370.6 325.4,368.7 332.3,371.1 339.2,374.1 346.2,376.8 353.1,383.8 360,390.7 366.9,395.3 376.2,396.5 383.1,398.8 390,401.1 394.7,399.9 396.5,396.5" fill="none" stroke="#9a18e0" stroke-width="1.2" stroke-linejoin="round"/><path d="M39 392.5H439" stroke="#f7941d" stroke-width="1" shape-rendering="crispEdges"/><text x="203.7" y="239.1" font-size="11" fill="#f07814" text-anchor="middle" letter-spacing=".35">88.379</text><text x="91.9" y="321.1" font-size="11" fill="#18c818" text-anchor="middle" letter-spacing=".35">87.832</text><text x="248" y="430" font-size="11" fill="#18c818" text-anchor="middle" letter-spacing=".35">86.920</text></g><rect x="439" y="383" width="65" height="18.5" fill="#f7941d"/><text x="472" y="396.5" font-size="11" fill="#fff" text-anchor="middle" letter-spacing="-.4">87.101</text><rect x="39" y="560.5" width="400" height="132.0" fill="#000"/><path d="M42.5 561.5V691.5M46.5 561.5V691.5M50.5 561.5V691.5M54.5 561.5V691.5M58.5 561.5V691.5M62.5 561.5V691.5M66.5 561.5V691.5M70.5 561.5V691.5M74.5 561.5V691.5M78.5 561.5V691.5M82.5 561.5V691.5M90.5 561.5V691.5M94.5 561.5V691.5M98.5 561.5V691.5M102.5 561.5V691.5M106.5 561.5V691.5M110.5 561.5V691.5M114.5 561.5V691.5M118.5 561.5V691.5M122.5 561.5V691.5M126.5 561.5V691.5M130.5 561.5V691.5M138.5 561.5V691.5M142.5 561.5V691.5M146.5 561.5V691.5M150.5 561.5V691.5M154.5 561.5V691.5M158.5 561.5V691.5M162.5 561.5V691.5M166.5 561.5V691.5M170.5 561.5V691.5M174.5 561.5V691.5M178.5 561.5V691.5M186.5 561.5V691.5M190.5 561.5V691.5M194.5 561.5V691.5M198.5 561.5V691.5M202.5 561.5V691.5M206.5 561.5V691.5M210.5 561.5V691.5M214.5 561.5V691.5M218.5 561.5V691.5M222.5 561.5V691.5M226.5 561.5V691.5M234.5 561.5V691.5M238.5 561.5V691.5M242.5 561.5V691.5M246.5 561.5V691.5M250.5 561.5V691.5M254.5 561.5V691.5M258.5 561.5V691.5M262.5 561.5V691.5M266.5 561.5V691.5M270.5 561.5V691.5M274.5 561.5V691.5M282.5 561.5V691.5M286.5 561.5V691.5M290.5 561.5V691.5M294.5 561.5V691.5M298.5 561.5V691.5M302.5 561.5V691.5M306.5 561.5V691.5M310.5 561.5V691.5M314.5 561.5V691.5M318.5 561.5V691.5M322.5 561.5V691.5M330.5 561.5V691.5M334.5 561.5V691.5M338.5 561.5V691.5M342.5 561.5V691.5M346.5 561.5V691.5M350.5 561.5V691.5M354.5 561.5V691.5M358.5 561.5V691.5M362.5 561.5V691.5M366.5 561.5V691.5M370.5 561.5V691.5M378.5 561.5V691.5M382.5 561.5V691.5M386.5 561.5V691.5M390.5 561.5V691.5M394.5 561.5V691.5M398.5 561.5V691.5M402.5 561.5V691.5M406.5 561.5V691.5M410.5 561.5V691.5M414.5 561.5V691.5M418.5 561.5V691.5M426.5 561.5V691.5M430.5 561.5V691.5M434.5 561.5V691.5M438.5 561.5V691.5M40 562.5H438M40 565.5H438M40 568.5H438M40 572.5H438M40 575.5H438M40 578.5H438M40 582.5H438M40 585.5H438M40 588.5H438M40 592.5H438M40 595.5H438M40 602.5H438M40 605.5H438M40 608.5H438M40 612.5H438M40 615.5H438M40 619.5H438M40 622.5H438M40 629.5H438M40 632.5H438M40 635.5H438M40 639.5H438M40 642.5H438M40 645.5H438M40 649.5H438M40 655.5H438M40 659.5H438M40 662.5H438M40 665.5H438M40 669.5H438M40 672.5H438M40 675.5H438M40 679.5H438M40 682.5H438M40 686.5H438M40 689.5H438" stroke="#242424" stroke-width="1" fill="none" shape-rendering="crispEdges"/><path d="M40 598.5H438M40 625.5H438M40 652.5H438M134.5 561.5V691.5M230.5 561.5V691.5M326.5 561.5V691.5M422.5 561.5V691.5" stroke="#3a3a3a" stroke-width="1" fill="none" shape-rendering="crispEdges"/><path d="M86.5 561.5V691.5M182.5 561.5V691.5M278.5 561.5V691.5M374.5 561.5V691.5" stroke="#6e6e6e" stroke-width="1" fill="none" shape-rendering="crispEdges"/><polyline points="40.3,626.6 44.5,638.2 48.3,616.6 52.6,616.6 56.8,647.1 60.6,636.6 64.5,630 68.3,633.6 72.5,635.4 76.5,614.3 80.7,641.3 85,641.3 89.1,643.6 92.7,648.5 96.5,636.2 100.4,638.6 104.5,633.6 108.4,632 112.2,626.6 116.4,626.3 120.4,623.5 124.3,632 128.4,622 132.6,613.2 136.4,625.5 140.4,616.6 144.3,623.5 148.4,612.5 152.3,614.3 156.5,617.4 160.5,624.3 164.6,613.5 168.5,620.5 172.6,624.6 176.5,623.5 180.5,620.5 184.3,602 188.5,609.2 192.3,609.2 196.5,599.4 200.5,606.6 204.4,594 206.2,619.7 208.5,661.3 212.4,665.4 216.5,660.5 220.4,657.4 224.4,651.6 228.5,658.5 232,660.2 236.3,666.2 240.5,668.5 244.3,668.5 248.6,657.4 252.8,649.7 256.6,642 260.5,635.4 264.3,637.4 268.5,628.6 272.5,639.7 276.7,625.9 280.5,623.5 285.1,623.5 289,625.9 292.5,634.3 296.4,636.2 300.5,638.9 304.4,645.6 308.6,636.6 312.4,629.7 316.4,623.5 320.6,630.5 324.4,636.2 328.6,637.4 332.4,634.6 336.4,637.4 340.6,633.6 344.4,644.3 348.6,654.4 352.5,656.2 356.5,657.4 360.6,645.9 364.5,650.5 368.6,650.5 372.5,644.3 376.5,654.7 380.3,643.6 384.5,651.6 388.7,645.1 392.5,628.6 396.8,628.6" fill="none" stroke="#8a10e0" stroke-width="1.3" stroke-linejoin="round"/><polyline points="40.3,631.2 44.5,632 48.3,629.7 52.6,629.7 56.8,634.3 60.6,632.5 64.5,631.2 68.3,632.5 72.5,632.5 76.5,628.9 80.7,634.3 85,634.6 89.1,635.6 92.7,636.6 96.5,633.6 100.4,634.6 104.5,633.6 108.4,633.6 112.2,632.5 116.4,631.6 120.4,631.6 124.3,632.5 128.4,631.6 132.6,629.7 136.4,631.6 140.4,629.7 144.3,630.5 148.4,627.4 152.3,627.4 156.5,628.6 160.5,629.7 164.6,627.4 168.5,628.6 180.5,628.6 184.3,624.6 188.5,625.5 192.3,625.5 196.5,622.3 200.5,623.5 204.4,620.9 206.2,630.5 208.5,641.7 212.4,644.6 216.5,642.5 220.4,641.7 224.4,639.4 228.5,643.3 232,643.3 236.3,647.1 240.5,648.5 244.3,648.5 248.6,645.6 252.8,644.3 256.6,641.7 260.5,639.4 264.3,640.5 268.5,638.5 272.5,640.5 276.7,636.6 280.5,635.4 285.1,635.4 289,636.6 292.5,638.5 300.5,638.5 304.4,640.5 308.6,638.5 312.4,636.6 316.4,635.4 320.6,636.6 324.4,637.7 328.6,638.5 332.4,637.4 336.4,638.5 340.6,637.4 344.4,639.4 348.6,641.6 356.5,641.6 360.6,640.5 372.5,640.5 376.5,641.6 380.3,640.5 384.5,641.6 388.7,640.5 392.5,638.5 396.8,638.5" fill="none" stroke="#e8660c" stroke-width="1.3" stroke-linejoin="round"/><rect x="39" y="719.5" width="400" height="132.0" fill="#000"/><path d="M42.5 720.5V850.5M46.5 720.5V850.5M50.5 720.5V850.5M54.5 720.5V850.5M58.5 720.5V850.5M62.5 720.5V850.5M66.5 720.5V850.5M70.5 720.5V850.5M74.5 720.5V850.5M78.5 720.5V850.5M82.5 720.5V850.5M90.5 720.5V850.5M94.5 720.5V850.5M98.5 720.5V850.5M102.5 720.5V850.5M106.5 720.5V850.5M110.5 720.5V850.5M114.5 720.5V850.5M118.5 720.5V850.5M122.5 720.5V850.5M126.5 720.5V850.5M130.5 720.5V850.5M138.5 720.5V850.5M142.5 720.5V850.5M146.5 720.5V850.5M150.5 720.5V850.5M154.5 720.5V850.5M158.5 720.5V850.5M162.5 720.5V850.5M166.5 720.5V850.5M170.5 720.5V850.5M174.5 720.5V850.5M178.5 720.5V850.5M186.5 720.5V850.5M190.5 720.5V850.5M194.5 720.5V850.5M198.5 720.5V850.5M202.5 720.5V850.5M206.5 720.5V850.5M210.5 720.5V850.5M214.5 720.5V850.5M218.5 720.5V850.5M222.5 720.5V850.5M226.5 720.5V850.5M234.5 720.5V850.5M238.5 720.5V850.5M242.5 720.5V850.5M246.5 720.5V850.5M250.5 720.5V850.5M254.5 720.5V850.5M258.5 720.5V850.5M262.5 720.5V850.5M266.5 720.5V850.5M270.5 720.5V850.5M274.5 720.5V850.5M282.5 720.5V850.5M286.5 720.5V850.5M290.5 720.5V850.5M294.5 720.5V850.5M298.5 720.5V850.5M302.5 720.5V850.5M306.5 720.5V850.5M310.5 720.5V850.5M314.5 720.5V850.5M318.5 720.5V850.5M322.5 720.5V850.5M330.5 720.5V850.5M334.5 720.5V850.5M338.5 720.5V850.5M342.5 720.5V850.5M346.5 720.5V850.5M350.5 720.5V850.5M354.5 720.5V850.5M358.5 720.5V850.5M362.5 720.5V850.5M366.5 720.5V850.5M370.5 720.5V850.5M378.5 720.5V850.5M382.5 720.5V850.5M386.5 720.5V850.5M390.5 720.5V850.5M394.5 720.5V850.5M398.5 720.5V850.5M402.5 720.5V850.5M406.5 720.5V850.5M410.5 720.5V850.5M414.5 720.5V850.5M418.5 720.5V850.5M426.5 720.5V850.5M430.5 720.5V850.5M434.5 720.5V850.5M438.5 720.5V850.5M40 721.5H438M40 724.5H438M40 728.5H438M40 731.5H438M40 735.5H438M40 739.5H438M40 742.5H438M40 746.5H438M40 753.5H438M40 756.5H438M40 760.5H438M40 763.5H438M40 767.5H438M40 771.5H438M40 774.5H438M40 778.5H438M40 781.5H438M40 788.5H438M40 792.5H438M40 795.5H438M40 799.5H438M40 802.5H438M40 806.5H438M40 810.5H438M40 813.5H438M40 817.5H438M40 824.5H438M40 827.5H438M40 831.5H438M40 834.5H438M40 838.5H438M40 842.5H438M40 845.5H438M40 849.5H438" stroke="#242424" stroke-width="1" fill="none" shape-rendering="crispEdges"/><path d="M40 749.5H438M40 785.5H438M40 820.5H438M134.5 720.5V850.5M230.5 720.5V850.5M326.5 720.5V850.5M422.5 720.5V850.5" stroke="#3a3a3a" stroke-width="1" fill="none" shape-rendering="crispEdges"/><path d="M86.5 720.5V850.5M182.5 720.5V850.5M278.5 720.5V850.5M374.5 720.5V850.5" stroke="#6e6e6e" stroke-width="1" fill="none" shape-rendering="crispEdges"/><path d="M39.6 750.2H42.6M43.6 750.2H46.6M47.6 750.2H50.6M51.6 750.2H54.6M55.9 750.2H58.3V751.4H55.9ZM59.9 750.2H62.3V752.2H59.9ZM63.9 750.2H66.3V752.2H63.9ZM67.9 750.2H70.3V752.5H67.9ZM71.9 750.2H74.3V752.2H71.9ZM75.6 750.2H78.6M79.9 750.2H82.3V753.2H79.9ZM83.9 750.2H86.3V755.2H83.9ZM87.9 750.2H90.3V756.4H87.9ZM91.9 750.2H94.3V756.8H91.9ZM95.9 750.2H98.3V756.4H95.9ZM99.9 750.2H102.3V755.2H99.9ZM103.9 750.2H106.3V754.4H103.9ZM107.9 750.2H110.3V752.2H107.9ZM111.6 750.2H114.6M115.6 750.2H118.6M119.9 748.7H122.3V750.2H119.9ZM123.9 748.7H126.3V750.2H123.9ZM127.9 747.6H130.3V750.2H127.9ZM131.9 746.7H134.3V750.2H131.9ZM135.9 746.3H138.3V750.2H135.9ZM139.9 745.6H142.3V750.2H139.9ZM143.9 745.6H146.3V750.2H143.9ZM147.9 744.5H150.3V750.2H147.9ZM151.9 744.8H154.3V750.2H151.9ZM155.9 744.8H158.3V750.2H155.9ZM159.9 745.6H162.3V750.2H159.9ZM163.9 745.6H166.3V750.2H163.9ZM167.9 746.7H170.3V750.2H167.9ZM171.9 747.9H174.3V750.2H171.9ZM175.9 748.2H178.3V750.2H175.9ZM179.9 747.6H182.3V750.2H179.9ZM183.9 746.3H186.3V750.2H183.9ZM187.9 746H190.3V750.2H187.9ZM191.9 745.3H194.3V750.2H191.9ZM195.9 744.5H198.3V750.2H195.9ZM199.9 744H202.3V750.2H199.9ZM203.9 742.2H206.3V750.2H203.9ZM207.9 750.2H210.3V758.7H207.9ZM211.9 750.2H214.3V772.5H211.9ZM215.9 750.2H218.3V778.4H215.9ZM219.9 750.2H222.3V780.5H219.9ZM223.9 750.2H226.3V778.4H223.9ZM227.9 750.2H230.3V779.5H227.9ZM231.9 750.2H234.3V779.5H231.9ZM235.9 750.2H238.3V781.8H235.9ZM239.9 750.2H242.2V782.5H239.9ZM243.8 750.2H246.2V781.8H243.8ZM247.8 750.2H250.2V776.4H247.8ZM251.8 750.2H254.2V770.7H251.8ZM255.8 750.2H258.2V762.5H255.8ZM259.8 750.2H262.2V754.4H259.8ZM263.5 750.2H266.5M267.8 745.6H270.2V750.2H267.8ZM271.8 744.8H274.2V750.2H271.8ZM275.8 739.4H278.2V750.2H275.8ZM279.8 736.3H282.2V750.2H279.8ZM283.8 734.3H286.2V750.2H283.8ZM287.8 733.3H290.2V750.2H287.8ZM291.8 736.3H294.2V750.2H291.8ZM295.8 738.3H298.2V750.2H295.8ZM299.8 740.5H302.2V750.2H299.8ZM303.8 743.6H306.2V750.2H303.8ZM307.8 743.6H310.2V750.2H307.8ZM311.8 742.5H314.2V750.2H311.8ZM315.8 741.7H318.2V750.2H315.8ZM319.8 741.7H322.2V750.2H319.8ZM323.8 743.6H326.2V750.2H323.8ZM327.8 744.5H330.2V750.2H327.8ZM331.8 744.5H334.2V750.2H331.8ZM335.8 745.6H338.2V750.2H335.8ZM339.8 745.6H342.2V750.2H339.8ZM343.8 747.2H346.2V750.2H343.8ZM347.5 750.2H350.5M351.8 750.2H354.2V751.2H351.8ZM355.8 750.2H358.2V753.2H355.8ZM359.8 750.2H362.2V752.5H359.8ZM363.8 750.2H366.2V752.2H363.8ZM367.8 750.2H370.2V751.2H367.8ZM371.5 750.2H374.5M375.8 750.2H378.2V751.2H375.8ZM379.5 750.2H382.5M383.8 750.2H386.2V751.2H383.8ZM387.5 750.2H390.5M391.8 748.7H394.2V750.2H391.8ZM395.8 746.3H398.2V750.2H395.8Z" fill="#202020" stroke="#a8a8a8" stroke-width=".9"/><polyline points="40.3,750.2 44.5,751.4 48.3,749.7 52.6,748.7 56.8,753 60.6,754.4 64.5,754.4 68.3,755.3 72.5,756.4 76.5,752.5 80.7,756.8 85,761 89.1,764.1 93,766.7 97.6,767.6 102.2,767.6 106.9,766.7 111.5,764.5 116.1,763 120.7,761 125.3,759.9 128.4,759.4 132.6,756.4 136.4,755.3 140.4,753.3 144.6,752.2 148.4,749.7 152.6,747.6 156.5,746.7 160.5,746.3 164.6,744.5 168.5,744.5 172.6,745.6 176.5,745.6 180.5,745.6 184.3,741.7 188.5,740.2 192.3,738.3 196.5,735.6 200.5,734 204.4,730.2 206.2,737.1 209.3,754 213.1,770.2 217,781.8 220.8,791.8 224.7,797.2 228.5,804.9 232,811.8 236.3,824.9 240.5,834.9 245.1,840.3 248.9,841.5 253.1,839.5 257.1,834.1 261.1,828.8 265.1,822.6 268.5,816.9 272.5,814.1 276.7,808 281,801 285.1,794.4 289,789.5 293.2,788.4 297.2,786.4 301.2,786.4 305.2,787.5 309.2,785.6 313.2,781.8 317.2,778.7 321.2,777.2 325.2,777.2 329.2,776.1 333.2,775.6 337.2,775.3 341.2,774.5 345.2,775.6 349.2,778.7 353.2,781.8 357.2,783.3 365.2,783.3 373.3,783.3 377.3,784.4 381.3,783.6 385.3,784.4 389.3,782.9 393.3,779.5 396.8,777.2" fill="none" stroke="#e80c0c" stroke-width="1.3" stroke-linejoin="round"/><polyline points="40.3,749.7 48.3,749.7 56.8,750.2 64.5,751.7 72.5,753.3 80.7,753.7 85,755.9 89.1,757.9 93,759.7 97.6,761.4 102.2,762.5 106.9,763.6 111.5,763.8 116.1,763.8 120.7,763.3 128.4,762.5 132.6,760.7 136.4,759.7 140.4,758.7 144.6,757.4 148.4,755.9 152.6,754.4 156.5,752.5 160.5,751.4 164.6,750.2 168.5,749.4 172.6,748.2 176.5,747.6 180.5,747.1 184.3,746 188.5,744.3 192.3,743.3 196.5,742.2 200.5,740.5 204.4,738.3 208.5,740.2 213.1,747.1 217,754.8 220.8,762.5 224.7,769.5 228.5,776.4 232,782.5 236.3,791 240.5,800.3 245.1,809.5 248.9,815.7 253.1,820.3 257.1,823.1 261.1,824.4 265.1,824.1 268.5,822.6 272.5,821.5 276.7,818.7 281,814.9 285.1,810.6 289,806.4 293.2,802.6 297.2,799.5 301.2,796.7 305.2,795.3 309.2,793.3 313.2,790.7 317.2,787.9 321.2,785.6 325.2,784.1 329.2,782.5 333.2,781 337.2,779.9 341.2,778.7 345.2,777.9 349.2,777.9 353.2,778.4 357.2,779.5 361.2,780.5 365.2,781.3 373.3,781.3 377.3,782.1 381.3,782.1 385.3,782.5 389.3,783.3 393.3,782.2 396.8,781.3" fill="none" stroke="#10c0c8" stroke-width="1.3" stroke-linejoin="round"/></svg><div style="left:440px;top:121.5px;width:64px;height:412px;overflow:hidden"><div class="t n ax" style="top:34px">89.000</div><div class="t n ax" style="top:94px">88.500</div><div class="t n ax" style="top:154px">88.000</div><div class="t n ax" style="top:214px">87.500</div><div class="t n ax" style="top:274px">87.000</div><div class="t n ax" style="top:334px">86.500</div><div class="t n ax" style="top:394px">86.000</div></div><div class="t n r" style="left:40px;top:545.5px;line-height:14px">RSI:<span class="g" style="width:6px"></span><span style="color:#9a18e0"><span class="j">短期</span>[9]49.9044</span><span class="g"></span><span style="color:#f06a10"><span class="j">長期</span>[42]46.7330</span></div><div class="t n" style="left:440.5px;width:64px;text-align:center;top:591.8px;line-height:14px">70</div><div class="t n" style="left:440.5px;width:64px;text-align:center;top:618.6px;line-height:14px">50</div><div class="t n" style="left:440.5px;width:64px;text-align:center;top:645.4px;line-height:14px">30</div><div class="t n r" style="left:40px;top:704.5px;line-height:14px">MACD:<span class="g" style="width:6px"></span><span style="color:#e81010">MACD[12-26]0.2494</span><span class="g"></span><span style="color:#12b4c4"><span class="k">シグナル</span>[9]0.3616</span><span class="g"></span><span style="color:#a0a0a0"><span class="j">乖離</span>-0.1122</span></div><div class="t n" style="left:440.5px;width:64px;text-align:center;top:742.6px;line-height:14px">0.0000</div><div class="t n" style="left:440.5px;width:64px;text-align:center;top:778.1px;line-height:14px">-10.0000</div><div class="t n" style="left:440.5px;width:64px;text-align:center;top:813.6px;line-height:14px">-20.0000</div><div style="left:36.5px;top:854.5px;width:467px;height:1px;background:#b4b4b4"></div><div class="t n" style="left:39px;top:856px;line-height:15px"><span class="j">始値</span>:</div><div class="t n" style="left:115px;top:856px;line-height:15px"><span class="j">高値</span>:</div><div class="t n" style="left:191px;top:856px;line-height:15px"><span class="j">安値</span>:</div><div class="t n" style="left:231.5px;width:100px;text-align:right;top:856px;line-height:15px"><span class="j">終値</span>:87.101</div><div class="sb" style="left:336.5px;top:855.5px;width:16.5px;height:16px;"><i class="lf"></i></div><div class="trk" style="left:352.5px;top:855.5px;width:49px;height:16px;"></div><div class="thumb" style="left:379px;top:855.5px;width:14.5px;height:16px;"></div><div class="sb" style="left:401.5px;top:855.5px;width:16.5px;height:16px;"><i class="rt"></i></div><div style="left:418px;top:855.5px;width:22px;height:16px;background:#fff"><div class="t n" style="left:3.5px;top:1px;line-height:14px">100</div></div><div class="sb" style="left:440px;top:855.5px;width:16.5px;height:16px;"><i class="dn2"></i></div><div class="sb" style="left:471.5px;top:855.5px;width:16px;height:16px;"><i class="ph"></i><i class="pv"></i></div><div class="sb" style="left:488px;top:855.5px;width:16.5px;height:16px;"><i class="ph"></i></div></div><div style="left:0px;top:0px;width:1609px;height:2.6px;background:linear-gradient(#0d2352,#0d2352 65%,#9aa3b8)"></div><div class="tab" style="left:5.5px;width:117px"><span class="k">トレード</span>A</div><div class="tab" style="left:123.5px;width:117px"><span class="k">トレード</span>B</div><div class="tab" style="left:241.5px;width:117px"><span class="j">照会</span></div><div class="tab on" style="left:359.5px;width:117px"><span class="k">チャート</span></div><div style="left:1589px;top:895px;width:11px;height:3px;background:#555"></div><div style="left:1593px;top:891px;width:3px;height:11px;background:#555"></div></body></html>
